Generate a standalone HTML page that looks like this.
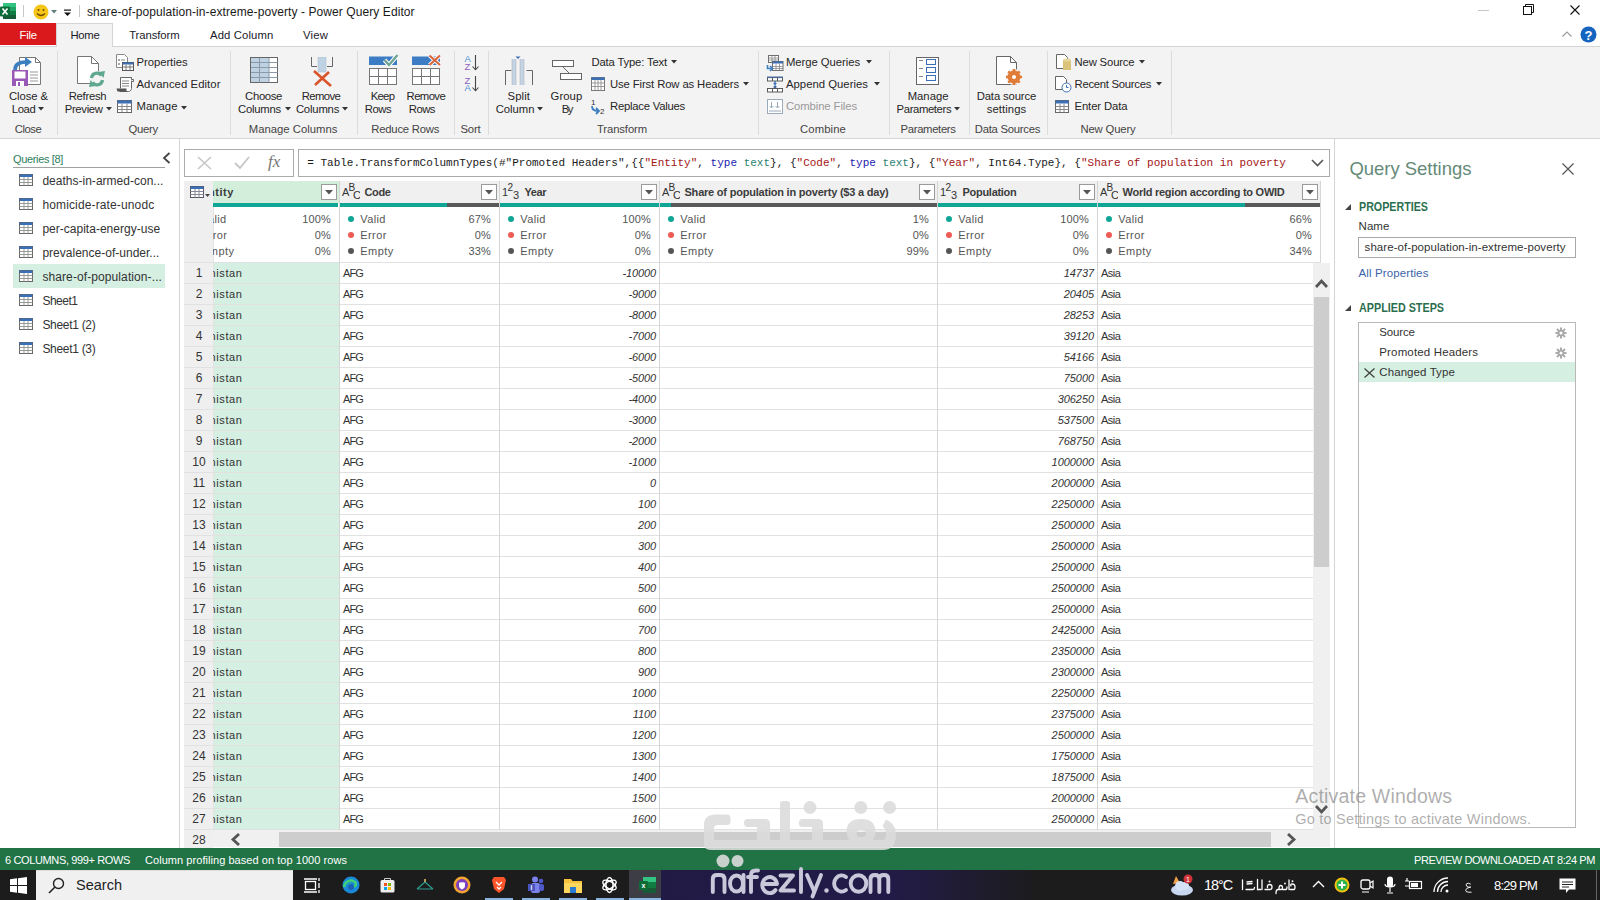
<!DOCTYPE html>
<html><head><meta charset="utf-8">
<style>
*{margin:0;padding:0;box-sizing:border-box}
html,body{width:1600px;height:900px;overflow:hidden;background:#fff;font-family:"Liberation Sans",sans-serif;color:#262626}
.a{position:absolute;white-space:nowrap}
#title{left:0;top:0;width:1600px;height:24px;background:#fff}
#tabs{left:0;top:24px;width:1600px;height:22px;background:#fff}
#ribbon{left:0;top:46px;width:1600px;height:93px;background:#f4f3f3;border-top:1px solid #d4d4d4;border-bottom:1px solid #d4d4d4}
#ribbon .a{}
.rl{font-size:11.3px;color:#262626;line-height:14px}
.gl{font-size:11.3px;color:#444;top:75px;line-height:14px}
.sep{width:1px;background:#dcdcdc;top:4px;height:84px}
#main{left:0;top:138px;width:1600px;height:710px}
#status{left:0;top:848px;width:1600px;height:22px;background:#217346;color:#fff;font-size:12px}
#task{left:0;top:870px;width:1600px;height:30px;background:#1f1f23}
</style></head><body>
<div class="a" id="title">
 <svg class="a" style="left:0;top:3px" width="17" height="17" viewBox="0 0 17 17">
  <rect x="3" y="0" width="13" height="16" fill="#107c41" rx="1"/>
  <rect x="3" y="0" width="13" height="4" fill="#33c481"/>
  <rect x="3" y="4" width="13" height="4" fill="#21a366"/>
  <rect x="3" y="12" width="13" height="4" fill="#185c37"/>
  <rect x="0" y="3.5" width="10" height="10" fill="#0e6b3a" rx="1"/>
  <path d="M2.5 5.5L7.5 11.5M7.5 5.5L2.5 11.5" stroke="#fff" stroke-width="1.6"/>
 </svg>
 <div class="a" style="left:23px;top:5px;width:1px;height:12px;background:#c8c8c8"></div>
 <svg class="a" style="left:33px;top:4px" width="16" height="16" viewBox="0 0 16 16">
  <circle cx="8" cy="8" r="7.5" fill="#f5c518"/>
  <circle cx="5.5" cy="6" r="1" fill="#6b4a00"/><circle cx="10.5" cy="6" r="1" fill="#6b4a00"/>
  <path d="M4 9.5 Q8 13.5 12 9.5" stroke="#6b4a00" stroke-width="1.2" fill="none"/>
 </svg>
 <svg class="a" style="left:51px;top:10px" width="6" height="4"><path d="M0 0H6L3 3.5Z" fill="#5f7f7f"/></svg>
 <svg class="a" style="left:64px;top:9px" width="8" height="8"><rect x="0" y="0.5" width="7" height="1.2" fill="#111"/><path d="M0 3.5H7L3.5 7Z" fill="#111"/></svg>
 <div class="a" style="left:79px;top:5px;width:1px;height:12px;background:#c8c8c8"></div>
 <div class="a" style="left:1478px;top:10px;width:11px;height:1px;background:#c8c8c8"></div>
 <svg class="a" style="left:1523px;top:4px" width="12" height="12" viewBox="0 0 12 12"><rect x="0.5" y="2.5" width="8" height="8" fill="none" stroke="#111" stroke-width="1"/><path d="M2.5 2.5V0.5H10.5V8.5H8.5" fill="none" stroke="#111" stroke-width="1"/></svg>
 <svg class="a" style="left:1570px;top:5px" width="10" height="10" viewBox="0 0 10 10"><path d="M0.5 0.5L9.5 9.5M9.5 0.5L0.5 9.5" stroke="#111" stroke-width="1.1"/></svg>
<div class="a" style="left:87.00px;top:5.59px;font-size:12.00px;line-height:12.00px;color:#1a1a1a;letter-spacing:0.083px">share-of-population-in-extreme-poverty - Power Query Editor</div>
</div>
<div class="a" id="tabs">
 <div class="a" style="left:0;top:-1px;width:56px;height:22px;background:#d9191c"></div>
 <div class="a" style="left:56px;top:-1px;width:57px;height:23px;background:#f4f3f3;border:1px solid #d4d4d4;border-bottom:none"></div>
 <svg class="a" style="left:1562px;top:7px" width="10" height="6"><path d="M0.5 5.5L5 1L9.5 5.5" stroke="#999" stroke-width="1.1" fill="none"/></svg>
 <svg class="a" style="left:1580px;top:2px" width="17" height="17" viewBox="0 0 17 17"><circle cx="8.5" cy="8.5" r="8" fill="#1565c0"/><text x="8.5" y="13.5" font-size="13" font-weight="bold" fill="#fff" text-anchor="middle" font-family="Liberation Sans">?</text></svg>
<div class="a" style="left:19.50px;top:6.03px;font-size:11.30px;line-height:11.30px;color:#fff;letter-spacing:-0.227px">File</div>
<div class="a" style="left:70.50px;top:6.03px;font-size:11.30px;line-height:11.30px;color:#1a1a2a;letter-spacing:-0.286px">Home</div>
<div class="a" style="left:129.20px;top:6.03px;font-size:11.30px;line-height:11.30px;color:#1a1a2a;letter-spacing:-0.085px">Transform</div>
<div class="a" style="left:210.00px;top:6.03px;font-size:11.30px;line-height:11.30px;color:#1a1a2a;letter-spacing:0.131px">Add Column</div>
<div class="a" style="left:303.00px;top:6.03px;font-size:11.30px;line-height:11.30px;color:#1a1a2a;letter-spacing:0.178px">View</div>
</div>
<div class="a" id="ribbon">
 <!-- separators -->
 <div class="a sep" style="left:57px"></div>
 <div class="a sep" style="left:230px"></div>
 <div class="a sep" style="left:357px"></div>
 <div class="a sep" style="left:454px"></div>
 <div class="a sep" style="left:488px"></div>
 <div class="a sep" style="left:758px"></div>
 <div class="a sep" style="left:889px"></div>
 <div class="a sep" style="left:969px"></div>
 <div class="a sep" style="left:1047px"></div>
 <div class="a sep" style="left:1171px"></div>
 <!-- group labels -->

 <!-- Close & Load -->
 <svg class="a" style="left:11px;top:9px" width="31" height="32" viewBox="0 0 31 32">
  <path d="M8.5 1.5H24.5L29.5 6.5V28.5H8.5Z" fill="#fff" stroke="#777" stroke-width="1"/>
  <path d="M24.5 1.5V6.5H29.5" fill="none" stroke="#777"/>
  <path d="M19 16H27M19 19H27M19 22H27M19 25H27" stroke="#999" stroke-width="1"/>
  <path d="M4 14 C4 8 9 6 15 6" stroke="#3b7fc1" stroke-width="3.6" fill="none"/>
  <path d="M14 1 L21 6 L14 11Z" fill="#3b7fc1"/>
  <rect x="1" y="14" width="16" height="16" fill="#9b59b6"/>
  <rect x="3.5" y="15.5" width="11" height="7" fill="#fff"/>
  <rect x="5" y="25" width="8" height="5" fill="#fff"/>
  <rect x="7" y="26" width="2" height="4" fill="#9b59b6"/>
 </svg>
 <svg class="a tri" style="left:38px;top:60px" width="6" height="4"><path d="M0 0H6L3 3.5Z" fill="#333"/></svg>

 <!-- Refresh Preview -->
 <svg class="a" style="left:76px;top:8px" width="30" height="33" viewBox="0 0 30 33">
  <path d="M1.5 1.5H15.5L22.5 8.5V28.5H1.5Z" fill="#fff" stroke="#777"/>
  <path d="M15.5 1.5V8.5H22.5" fill="none" stroke="#777"/>
  <circle cx="21" cy="24" r="8" fill="#f4f3f3"/>
  <path d="M15.5 23 A5.5 5.5 0 0 1 25.5 20.5" stroke="#5ea88f" stroke-width="3.2" fill="none"/>
  <path d="M26.5 25 A5.5 5.5 0 0 1 16.5 27.5" stroke="#5ea88f" stroke-width="3.2" fill="none"/>
  <path d="M22.5 17L29 16L27.5 23Z" fill="#5ea88f"/>
  <path d="M19.5 31L13 32L14.5 25Z" fill="#5ea88f"/>
 </svg>
 <svg class="a tri" style="left:106px;top:60px" width="6" height="4"><path d="M0 0H6L3 3.5Z" fill="#333"/></svg>

 <!-- Properties / Advanced Editor / Manage -->
 <svg class="a" style="left:116px;top:7px" width="18" height="17" viewBox="0 0 18 17">
  <path d="M0.5 0.5H8.5L11.5 3.5V13.5H0.5Z" fill="#fff" stroke="#888"/>
  <circle cx="3" cy="6" r="1" fill="#888"/><circle cx="3" cy="10" r="1" fill="#888"/>
  <path d="M5 6H9" stroke="#888"/>
  <rect x="6.5" y="8.5" width="11" height="8" fill="#fff" stroke="#555"/>
  <rect x="6.5" y="8.5" width="11" height="2" fill="#3b6fb6"/>
  <path d="M6.5 13H17.5M10 10.5V16.5M14 10.5V16.5" stroke="#777"/>
 </svg>
 <svg class="a" style="left:116px;top:30px" width="18" height="16" viewBox="0 0 18 16">
  <path d="M4.5 0.5H15.5V11.5C15.5 13 14 14.5 12.5 14.5H3.5" fill="#fff" stroke="#666"/>
  <path d="M15.5 2.5H17.5V4.5H15.5" fill="#fff" stroke="#666"/>
  <path d="M6 4H13M6 6.5H13M6 9H13" stroke="#888"/>
  <path d="M0.5 11.5H10.5V14.5H1.5Z" fill="#555"/>
  <path d="M4.5 0.5V11.5" stroke="#666"/>
 </svg>
 <svg class="a" style="left:117px;top:53px" width="15" height="13" viewBox="0 0 15 13">
  <rect x="0.5" y="0.5" width="14" height="12" fill="#fff" stroke="#666"/>
  <rect x="0.5" y="0.5" width="14" height="3" fill="#3b6fb6"/>
  <path d="M0.5 6.5H14.5M0.5 9.5H14.5M5 3.5V12.5M10 3.5V12.5" stroke="#888"/>
 </svg>
 <svg class="a tri" style="left:181px;top:59px" width="6" height="4"><path d="M0 0H6L3 3.5Z" fill="#333"/></svg>

 <!-- Choose Columns -->
 <svg class="a" style="left:250px;top:10px" width="29" height="27" viewBox="0 0 29 27">
  <rect x="0.5" y="0.5" width="27" height="25" fill="#fff" stroke="#666"/>
  <rect x="1" y="1" width="18" height="24" fill="#bfd2e3"/>
  <path d="M9.5 1V25.5M19 1V25.5M1 5.5H27.5M1 10.5H27.5M1 15.5H27.5M1 20.5H27.5" stroke="#8a9aa8"/>
 </svg>
 <svg class="a tri" style="left:285px;top:60px" width="6" height="4"><path d="M0 0H6L3 3.5Z" fill="#333"/></svg>

 <!-- Remove Columns -->
 <svg class="a" style="left:310px;top:10px" width="24" height="30" viewBox="0 0 24 30">
  <path d="M1.5 0V9.5H7M22.5 0V9.5H17" stroke="#666" fill="none"/>
  <rect x="8" y="0" width="8" height="15" fill="#bfd2e3" stroke="#a8bccc" stroke-width="0.5"/>
  <path d="M4 14L21 29M19 15L5 28" stroke="#d9532b" stroke-width="2.6"/>
 </svg>
 <svg class="a tri" style="left:342px;top:60px" width="6" height="4"><path d="M0 0H6L3 3.5Z" fill="#333"/></svg>

 <!-- Keep Rows -->
 <svg class="a" style="left:368px;top:7px" width="32" height="32" viewBox="0 0 32 32">
  <rect x="1" y="2.5" width="28" height="8.5" fill="#3b7cc4"/>
  <rect x="1.5" y="14.5" width="27" height="16" fill="#fff" stroke="#777"/>
  <path d="M1.5 22.5H28.5M10.5 14.5V30.5M19.5 14.5V30.5" stroke="#777" stroke-width="1"/>
  <path d="M16.5 6L21 11L29.5 1" stroke="#fff" stroke-width="4.4" fill="none"/>
  <path d="M16.5 6L21 11L29.5 1" stroke="#6fa393" stroke-width="2.4" fill="none"/>
 </svg>
 <!-- Remove Rows -->
 <svg class="a" style="left:411px;top:7px" width="32" height="32" viewBox="0 0 32 32">
  <rect x="1" y="2.5" width="28" height="8.5" fill="#3b7cc4"/>
  <rect x="1.5" y="14.5" width="27" height="16" fill="#fff" stroke="#777"/>
  <path d="M1.5 22.5H28.5M10.5 14.5V30.5M19.5 14.5V30.5" stroke="#777" stroke-width="1"/>
  <path d="M18.5 1.5L29 11M29 1.5L18.5 11" stroke="#fff" stroke-width="4" />
  <path d="M18.5 1.5L29 11M29 1.5L18.5 11" stroke="#d9653b" stroke-width="2.2"/>
 </svg>
 <!-- Sort -->
 <svg class="a" style="left:464px;top:7px" width="16" height="38" viewBox="0 0 16 38">
  <text x="0.5" y="7.5" font-size="9.5" fill="#4a8fd0" font-family="Liberation Sans">A</text>
  <text x="0.5" y="15.5" font-size="9.5" fill="#8a5fc0" font-family="Liberation Sans">Z</text>
  <path d="M11.5 1V15.5M8.5 12.5L11.5 15.8L14.5 12.5" stroke="#444" stroke-width="1.1" fill="none"/>
  <text x="0.5" y="29.5" font-size="9.5" fill="#8a5fc0" font-family="Liberation Sans">Z</text>
  <text x="0.5" y="37" font-size="9.5" fill="#4a8fd0" font-family="Liberation Sans">A</text>
  <path d="M11.5 22V36.5M8.5 33.5L11.5 36.8L14.5 33.5" stroke="#444" stroke-width="1.1" fill="none"/>
 </svg>

 <!-- Split Column -->
 <svg class="a" style="left:504px;top:9px" width="30" height="30" viewBox="0 0 30 30">
  <path d="M1.5 29V14.5H7.5M28.5 29V14.5H22.5" stroke="#666" fill="none"/>
  <rect x="8" y="3" width="4" height="26" fill="#c4d4e2"/>
  <rect x="16" y="3" width="4" height="26" fill="#c4d4e2"/>
  <path d="M8 3V29M12 3V29M16 3V29M20 3V29" stroke="#aab" stroke-width="0.5"/>
  <path d="M11.5 0.5H16.5L14 3Z" fill="#3b6fb6"/>
 </svg>
 <svg class="a tri" style="left:537px;top:60px" width="6" height="4"><path d="M0 0H6L3 3.5Z" fill="#333"/></svg>

 <!-- Group By -->
 <svg class="a" style="left:552px;top:13px" width="31" height="21" viewBox="0 0 31 21">
  <rect x="0.5" y="0.5" width="21" height="6" fill="#fff" stroke="#666"/>
  <rect x="8.5" y="13.5" width="21" height="6" fill="#fff" stroke="#666"/>
  <path d="M11 7L17 13" stroke="#666"/>
 </svg>

 <!-- Data Type etc -->
 <svg class="a tri" style="left:671px;top:13px" width="6" height="4"><path d="M0 0H6L3 3.5Z" fill="#333"/></svg>
 <svg class="a" style="left:591px;top:30px" width="15" height="14" viewBox="0 0 15 14">
  <rect x="0.5" y="0.5" width="13" height="13" fill="#fff" stroke="#777"/>
  <rect x="0.5" y="0.5" width="13" height="2.5" fill="#3b6fb6"/>
  <path d="M0.5 6H13.5M0.5 9.5H13.5M4 3V13.5M7 3V13.5M10 3V13.5" stroke="#999"/>
 </svg>
 <svg class="a tri" style="left:743px;top:35px" width="6" height="4"><path d="M0 0H6L3 3.5Z" fill="#333"/></svg>
 <svg class="a" style="left:590px;top:51px" width="17" height="17" viewBox="0 0 17 17">
  <text x="1" y="7" font-size="8" fill="#333" font-family="Liberation Sans">1</text>
  <text x="10" y="16" font-size="8" fill="#333" font-family="Liberation Sans">2</text>
  <path d="M2 8C2 12 4 13 8 13" stroke="#3b7fc1" stroke-width="1.8" fill="none"/>
  <path d="M6 10L9 13L6 16" stroke="#3b7fc1" stroke-width="1.8" fill="none"/>
 </svg>

 <!-- Combine -->
 <svg class="a" style="left:766px;top:8px" width="18" height="17" viewBox="0 0 18 17">
  <rect x="2.5" y="0.5" width="10" height="7" fill="#fff" stroke="#6d6d6d"/>
  <path d="M2.5 3H12.5M2.5 5H12.5M6 0.5V7.5M9 0.5V7.5" stroke="#888" stroke-width="0.8"/>
  <rect x="6.5" y="6.5" width="10.5" height="9" fill="#fff" stroke="#6d6d6d"/>
  <rect x="6.5" y="6.5" width="10.5" height="2" fill="#3b6fb6"/>
  <path d="M6.5 11.5H17M6.5 13.5H17M10 8.5V15.5M13.5 8.5V15.5" stroke="#888" stroke-width="0.8"/>
  <path d="M1.5 10V13.5H5.5" stroke="#3b7fc1" stroke-width="1.6" fill="none"/>
  <path d="M4 11L6.5 13.5L4 16" stroke="#3b7fc1" stroke-width="1.6" fill="none"/>
 </svg>
 <svg class="a" style="left:766px;top:29px" width="18" height="17" viewBox="0 0 18 17">
  <rect x="1.5" y="1.5" width="15" height="3.5" fill="#fff" stroke="#5a5a5a"/>
  <rect x="1" y="0.5" width="16" height="1.6" fill="#4a6a9a"/>
  <path d="M6.5 1.5V5M11.5 1.5V5" stroke="#5a5a5a"/>
  <path d="M9 5V8.5" stroke="#3b6fb6" stroke-width="1.4"/>
  <path d="M7 7L9 9.2L11 7Z" fill="#3b6fb6"/>
  <circle cx="9" cy="10.8" r="1.5" fill="#3b6fb6"/>
  <path d="M9 11V12.5" stroke="#5a5a5a"/>
  <rect x="1.5" y="12.5" width="15" height="3.5" fill="#fff" stroke="#5a5a5a"/>
  <path d="M6.5 12.5V16M11.5 12.5V16" stroke="#5a5a5a"/>
 </svg>
 <svg class="a tri" style="left:866px;top:13px" width="6" height="4"><path d="M0 0H6L3 3.5Z" fill="#333"/></svg>
 <svg class="a tri" style="left:874px;top:35px" width="6" height="4"><path d="M0 0H6L3 3.5Z" fill="#333"/></svg>
 <svg class="a" style="left:766px;top:51px" width="18" height="17" viewBox="0 0 18 17">
  <rect x="1.5" y="1.5" width="15" height="14" fill="#fff" stroke="#9ab"/>
  <path d="M5.5 4V10M3.5 8L5.5 10L7.5 8M11.5 4V10M9.5 8L11.5 10L13.5 8M3 13H15" stroke="#9ab" fill="none"/>
 </svg>

 <!-- Manage Parameters -->
 <svg class="a" style="left:915px;top:9px" width="25" height="30" viewBox="0 0 25 30">
  <rect x="1.5" y="1.5" width="22" height="27" fill="#fff" stroke="#666"/>
  <path d="M4 4.5H8M4 12.5H8M4 20.5H8" stroke="#888"/>
  <rect x="11.5" y="3.5" width="9" height="5" fill="#fff" stroke="#3b6fb6"/>
  <rect x="11.5" y="11.5" width="9" height="5" fill="#fff" stroke="#3b6fb6"/>
  <rect x="11.5" y="19.5" width="9" height="5" fill="#fff" stroke="#3b6fb6"/>
 </svg>
 <svg class="a tri" style="left:954px;top:60px" width="6" height="4"><path d="M0 0H6L3 3.5Z" fill="#333"/></svg>

 <!-- Data source settings -->
 <svg class="a" style="left:995px;top:9px" width="29" height="30" viewBox="0 0 29 30">
  <path d="M1.5 0.5H15.5L21.5 6.5V28.5H1.5Z" fill="#fff" stroke="#666"/>
  <path d="M15.5 0.5V6.5H21.5" fill="none" stroke="#666"/>
  <circle cx="19" cy="21" r="8" fill="#f4f3f3"/>
  <circle cx="19" cy="21" r="5" fill="none" stroke="#e07b35" stroke-width="3"/>
  <path d="M19 13V29M11 21H27M13.3 15.3L24.7 26.7M24.7 15.3L13.3 26.7" stroke="#e07b35" stroke-width="2.6"/>
  <circle cx="19" cy="21" r="2" fill="#fff"/>
 </svg>

 <!-- New Query -->
 <svg class="a" style="left:1056px;top:7px" width="17" height="17" viewBox="0 0 17 17">
  <path d="M0.5 0.5H8.5L11.5 3.5V14.5H0.5Z" fill="#fff" stroke="#666"/>
  <rect x="7" y="6" width="8" height="10" fill="#d9c27a"/>
  <ellipse cx="11" cy="6" rx="4" ry="1.5" fill="#e8d598"/>
 </svg>
 <svg class="a tri" style="left:1139px;top:13px" width="6" height="4"><path d="M0 0H6L3 3.5Z" fill="#333"/></svg>
 <svg class="a" style="left:1054px;top:29px" width="18" height="17" viewBox="0 0 18 17">
  <path d="M1.5 0.5H9.5L12.5 3.5V13.5H1.5Z" fill="#fff" stroke="#666"/>
  <circle cx="12.5" cy="11.5" r="4.5" fill="#fff" stroke="#3b6fb6"/>
  <path d="M12.5 9V11.5H14.5" stroke="#3b6fb6" fill="none"/>
 </svg>
 <svg class="a tri" style="left:1156px;top:35px" width="6" height="4"><path d="M0 0H6L3 3.5Z" fill="#333"/></svg>
 <svg class="a" style="left:1055px;top:53px" width="15" height="13" viewBox="0 0 15 13">
  <rect x="0.5" y="0.5" width="13" height="12" fill="#fff" stroke="#666"/>
  <rect x="0.5" y="0.5" width="13" height="3" fill="#3b6fb6"/>
  <path d="M0.5 6.5H13.5M0.5 9.5H13.5M5 3.5V12.5M9 3.5V12.5" stroke="#888"/>
 </svg>
<div class="a" style="left:9.00px;top:43.93px;font-size:11.30px;line-height:11.30px;color:#262626;letter-spacing:-0.081px">Close &amp;</div>
<div class="a" style="left:11.80px;top:56.73px;font-size:11.30px;line-height:11.30px;color:#262626;letter-spacing:-0.385px">Load</div>
<div class="a" style="left:68.70px;top:43.93px;font-size:11.30px;line-height:11.30px;color:#262626;letter-spacing:-0.281px">Refresh</div>
<div class="a" style="left:64.70px;top:56.73px;font-size:11.30px;line-height:11.30px;color:#262626;letter-spacing:-0.313px">Preview</div>
<div class="a" style="left:245.10px;top:43.93px;font-size:11.30px;line-height:11.30px;color:#262626;letter-spacing:-0.325px">Choose</div>
<div class="a" style="left:238.00px;top:56.73px;font-size:11.30px;line-height:11.30px;color:#262626;letter-spacing:-0.227px">Columns</div>
<div class="a" style="left:301.80px;top:43.93px;font-size:11.30px;line-height:11.30px;color:#262626;letter-spacing:-0.596px">Remove</div>
<div class="a" style="left:295.90px;top:56.73px;font-size:11.30px;line-height:11.30px;color:#262626;letter-spacing:-0.184px">Columns</div>
<div class="a" style="left:370.70px;top:43.93px;font-size:11.30px;line-height:11.30px;color:#262626;letter-spacing:-0.698px">Keep</div>
<div class="a" style="left:364.80px;top:56.73px;font-size:11.30px;line-height:11.30px;color:#262626;letter-spacing:-0.439px">Rows</div>
<div class="a" style="left:406.60px;top:43.93px;font-size:11.30px;line-height:11.30px;color:#262626;letter-spacing:-0.596px">Remove</div>
<div class="a" style="left:408.80px;top:56.73px;font-size:11.30px;line-height:11.30px;color:#262626;letter-spacing:-0.514px">Rows</div>
<div class="a" style="left:507.60px;top:43.93px;font-size:11.30px;line-height:11.30px;color:#262626;letter-spacing:0.103px">Split</div>
<div class="a" style="left:495.70px;top:56.73px;font-size:11.30px;line-height:11.30px;color:#262626;letter-spacing:-0.040px">Column</div>
<div class="a" style="left:550.60px;top:43.93px;font-size:11.30px;line-height:11.30px;color:#262626;letter-spacing:0.059px">Group</div>
<div class="a" style="left:561.80px;top:56.73px;font-size:11.30px;line-height:11.30px;color:#262626;letter-spacing:-1.494px">By</div>
<div class="a" style="left:907.70px;top:43.93px;font-size:11.30px;line-height:11.30px;color:#262626;letter-spacing:-0.006px">Manage</div>
<div class="a" style="left:896.60px;top:56.73px;font-size:11.30px;line-height:11.30px;color:#262626;letter-spacing:-0.381px">Parameters</div>
<div class="a" style="left:976.70px;top:43.93px;font-size:11.30px;line-height:11.30px;color:#262626;letter-spacing:-0.130px">Data source</div>
<div class="a" style="left:986.80px;top:56.73px;font-size:11.30px;line-height:11.30px;color:#262626;letter-spacing:0.057px">settings</div>
<div class="a" style="left:136.50px;top:10.43px;font-size:11.30px;line-height:11.30px;color:#262626;letter-spacing:-0.050px">Properties</div>
<div class="a" style="left:136.50px;top:31.93px;font-size:11.30px;line-height:11.30px;color:#262626;letter-spacing:0.072px">Advanced Editor</div>
<div class="a" style="left:136.50px;top:54.18px;font-size:11.30px;line-height:11.30px;color:#262626;letter-spacing:0.027px">Manage</div>
<div class="a" style="left:591.50px;top:10.43px;font-size:11.30px;line-height:11.30px;color:#262626;letter-spacing:-0.173px">Data Type: Text</div>
<div class="a" style="left:610.00px;top:31.93px;font-size:11.30px;line-height:11.30px;color:#262626;letter-spacing:-0.120px">Use First Row as Headers</div>
<div class="a" style="left:610.00px;top:54.18px;font-size:11.30px;line-height:11.30px;color:#262626;letter-spacing:-0.237px">Replace Values</div>
<div class="a" style="left:786.00px;top:10.43px;font-size:11.30px;line-height:11.30px;color:#262626;letter-spacing:-0.057px">Merge Queries</div>
<div class="a" style="left:786.00px;top:31.93px;font-size:11.30px;line-height:11.30px;color:#262626;letter-spacing:0.024px">Append Queries</div>
<div class="a" style="left:786.00px;top:54.18px;font-size:11.30px;line-height:11.30px;color:#9a9a9a;letter-spacing:-0.094px">Combine Files</div>
<div class="a" style="left:1074.50px;top:10.43px;font-size:11.30px;line-height:11.30px;color:#262626;letter-spacing:-0.155px">New Source</div>
<div class="a" style="left:1074.50px;top:31.93px;font-size:11.30px;line-height:11.30px;color:#262626;letter-spacing:-0.271px">Recent Sources</div>
<div class="a" style="left:1074.50px;top:54.18px;font-size:11.30px;line-height:11.30px;color:#262626;letter-spacing:-0.102px">Enter Data</div>
<div class="a" style="left:14.75px;top:77.13px;font-size:11.30px;line-height:11.30px;color:#444;letter-spacing:-0.478px">Close</div>
<div class="a" style="left:128.50px;top:77.13px;font-size:11.30px;line-height:11.30px;color:#444;letter-spacing:-0.254px">Query</div>
<div class="a" style="left:248.75px;top:77.13px;font-size:11.30px;line-height:11.30px;color:#444;letter-spacing:0.013px">Manage Columns</div>
<div class="a" style="left:371.25px;top:77.13px;font-size:11.30px;line-height:11.30px;color:#444;letter-spacing:-0.213px">Reduce Rows</div>
<div class="a" style="left:460.50px;top:77.13px;font-size:11.30px;line-height:11.30px;color:#444;letter-spacing:-0.181px">Sort</div>
<div class="a" style="left:597.00px;top:77.13px;font-size:11.30px;line-height:11.30px;color:#444;letter-spacing:-0.119px">Transform</div>
<div class="a" style="left:800.00px;top:77.13px;font-size:11.30px;line-height:11.30px;color:#444;letter-spacing:0.111px">Combine</div>
<div class="a" style="left:900.60px;top:77.13px;font-size:11.30px;line-height:11.30px;color:#444;letter-spacing:-0.341px">Parameters</div>
<div class="a" style="left:974.80px;top:77.13px;font-size:11.30px;line-height:11.30px;color:#444;letter-spacing:-0.264px">Data Sources</div>
<div class="a" style="left:1080.50px;top:77.13px;font-size:11.30px;line-height:11.30px;color:#444;letter-spacing:-0.169px">New Query</div>
</div>
<div class="a" id="main">
<div class="a" style="left:179px;top:0;width:1px;height:710px;background:#d4d4d4"></div>
<div class="a" style="left:13.00px;top:16.19px;font-size:11.00px;line-height:11.00px;color:#2e7d5b;letter-spacing:-0.346px">Queries [8]</div>
<div class="a" style="left:13px;top:29px;width:152px;height:1px;background:#a0a0a0"></div>
<svg class="a" style="left:162px;top:14px" width="9" height="12"><path d="M7.5 1L2 6L7.5 11" stroke="#444" stroke-width="1.8" fill="none"/></svg>
<svg class="a" style="left:19px;top:36px" width="14" height="12" viewBox="0 0 14 12"><rect x="0.5" y="0.5" width="13" height="11" fill="#fff" stroke="#666"/><rect x="0.5" y="0.5" width="13" height="2.5" fill="#3b6fb6"/><path d="M0.5 5.5H13.5M0.5 8.5H13.5M5 3V11.5M9 3V11.5" stroke="#999"/></svg>
<div class="a" style="left:42.40px;top:36.84px;font-size:12.00px;line-height:12.00px;color:#333;letter-spacing:0.013px">deaths-in-armed-con...</div>
<svg class="a" style="left:19px;top:60px" width="14" height="12" viewBox="0 0 14 12"><rect x="0.5" y="0.5" width="13" height="11" fill="#fff" stroke="#666"/><rect x="0.5" y="0.5" width="13" height="2.5" fill="#3b6fb6"/><path d="M0.5 5.5H13.5M0.5 8.5H13.5M5 3V11.5M9 3V11.5" stroke="#999"/></svg>
<div class="a" style="left:42.40px;top:60.84px;font-size:12.00px;line-height:12.00px;color:#333;letter-spacing:0.137px">homicide-rate-unodc</div>
<svg class="a" style="left:19px;top:84px" width="14" height="12" viewBox="0 0 14 12"><rect x="0.5" y="0.5" width="13" height="11" fill="#fff" stroke="#666"/><rect x="0.5" y="0.5" width="13" height="2.5" fill="#3b6fb6"/><path d="M0.5 5.5H13.5M0.5 8.5H13.5M5 3V11.5M9 3V11.5" stroke="#999"/></svg>
<div class="a" style="left:42.40px;top:84.84px;font-size:12.00px;line-height:12.00px;color:#333;letter-spacing:0.014px">per-capita-energy-use</div>
<svg class="a" style="left:19px;top:108px" width="14" height="12" viewBox="0 0 14 12"><rect x="0.5" y="0.5" width="13" height="11" fill="#fff" stroke="#666"/><rect x="0.5" y="0.5" width="13" height="2.5" fill="#3b6fb6"/><path d="M0.5 5.5H13.5M0.5 8.5H13.5M5 3V11.5M9 3V11.5" stroke="#999"/></svg>
<div class="a" style="left:42.40px;top:108.84px;font-size:12.00px;line-height:12.00px;color:#333;letter-spacing:0.012px">prevalence-of-under...</div>
<div class="a" style="left:13px;top:126px;width:152px;height:24px;background:#d5efe2"></div>
<svg class="a" style="left:19px;top:132px" width="14" height="12" viewBox="0 0 14 12"><rect x="0.5" y="0.5" width="13" height="11" fill="#fff" stroke="#666"/><rect x="0.5" y="0.5" width="13" height="2.5" fill="#3b6fb6"/><path d="M0.5 5.5H13.5M0.5 8.5H13.5M5 3V11.5M9 3V11.5" stroke="#999"/></svg>
<div class="a" style="left:42.40px;top:132.84px;font-size:12.00px;line-height:12.00px;color:#333;letter-spacing:0.096px">share-of-population-...</div>
<svg class="a" style="left:19px;top:156px" width="14" height="12" viewBox="0 0 14 12"><rect x="0.5" y="0.5" width="13" height="11" fill="#fff" stroke="#666"/><rect x="0.5" y="0.5" width="13" height="2.5" fill="#3b6fb6"/><path d="M0.5 5.5H13.5M0.5 8.5H13.5M5 3V11.5M9 3V11.5" stroke="#999"/></svg>
<div class="a" style="left:42.40px;top:156.84px;font-size:12.00px;line-height:12.00px;color:#333;letter-spacing:-0.506px">Sheet1</div>
<svg class="a" style="left:19px;top:180px" width="14" height="12" viewBox="0 0 14 12"><rect x="0.5" y="0.5" width="13" height="11" fill="#fff" stroke="#666"/><rect x="0.5" y="0.5" width="13" height="2.5" fill="#3b6fb6"/><path d="M0.5 5.5H13.5M0.5 8.5H13.5M5 3V11.5M9 3V11.5" stroke="#999"/></svg>
<div class="a" style="left:42.40px;top:180.84px;font-size:12.00px;line-height:12.00px;color:#333;letter-spacing:-0.304px">Sheet1 (2)</div>
<svg class="a" style="left:19px;top:204px" width="14" height="12" viewBox="0 0 14 12"><rect x="0.5" y="0.5" width="13" height="11" fill="#fff" stroke="#666"/><rect x="0.5" y="0.5" width="13" height="2.5" fill="#3b6fb6"/><path d="M0.5 5.5H13.5M0.5 8.5H13.5M5 3V11.5M9 3V11.5" stroke="#999"/></svg>
<div class="a" style="left:42.40px;top:204.84px;font-size:12.00px;line-height:12.00px;color:#333;letter-spacing:-0.304px">Sheet1 (3)</div>
<div class="a" style="left:184px;top:11px;width:110px;height:28px;border:1px solid #ababab;background:#fff"></div>
<svg class="a" style="left:197px;top:18px" width="15" height="14"><path d="M1 1L14 13M14 1L1 13" stroke="#c6c6c6" stroke-width="1.6"/></svg>
<svg class="a" style="left:234px;top:18px" width="16" height="13"><path d="M1 7L6 12L15 1" stroke="#c6c6c6" stroke-width="1.8" fill="none"/></svg>
<div class="a" style="left:268px;top:15px;font-family:'Liberation Serif',serif;font-style:italic;font-size:17px;color:#777;line-height:18px">fx</div>
<div class="a" style="left:298px;top:11px;width:1032px;height:28px;border:1px solid #ababab;background:#fff"></div>
<div class="a" style="left:307.2px;top:19.74px;font-family:'Liberation Mono',monospace;font-size:11.0px;color:#1a1a1a;line-height:11.0px;letter-spacing:0.011px">= Table.TransformColumnTypes(#"Promoted Headers",{{<span style="color:#a31515">"Entity"</span>, <span style="color:#1a1ab0">type</span> <span style="color:#2a7f70">text</span>}, {<span style="color:#a31515">"Code"</span>, <span style="color:#1a1ab0">type</span> <span style="color:#2a7f70">text</span>}, {<span style="color:#a31515">"Year"</span>, Int64.Type}, {<span style="color:#a31515">"Share of population in poverty</span></div>
<svg class="a" style="left:1311px;top:21px" width="13" height="8"><path d="M1 1L6.5 6.5L12 1" stroke="#555" stroke-width="1.6" fill="none"/></svg>
<div class="a" style="left:184px;top:43px;width:1136px;height:22px;background:#f0f0f0"></div>
<div class="a" style="left:184px;top:43px;width:29px;height:667px;background:#efefef"></div>
<div class="a" style="left:213px;top:43px;width:126px;height:22px;background:#d3eedb"></div>
<svg class="a" style="left:190px;top:48px" width="20" height="13" viewBox="0 0 20 13"><rect x="0.5" y="0.5" width="13" height="11" fill="#fff" stroke="#556"/><rect x="0.5" y="0.5" width="13" height="2.5" fill="#3b6fb6"/><path d="M0.5 5.5H13.5M0.5 8.5H13.5M5 3V11.5M9 3V11.5" stroke="#889"/><path d="M15 8H20L17.5 11Z" fill="#444"/></svg>
<div class="a" style="left:213px;top:69px;width:1107px;height:55px;background:#fff"></div>
<div class="a" style="left:213px;top:124px;width:126px;height:569px;background:#d5efe2"></div>
<div class="a" style="left:184px;top:124px;width:1129px;height:1px;background:#e1e1e1"></div>
<div class="a" style="left:184px;top:145px;width:1129px;height:1px;background:#e1e1e1"></div>
<div class="a" style="left:184px;top:166px;width:1129px;height:1px;background:#e1e1e1"></div>
<div class="a" style="left:184px;top:187px;width:1129px;height:1px;background:#e1e1e1"></div>
<div class="a" style="left:184px;top:208px;width:1129px;height:1px;background:#e1e1e1"></div>
<div class="a" style="left:184px;top:229px;width:1129px;height:1px;background:#e1e1e1"></div>
<div class="a" style="left:184px;top:250px;width:1129px;height:1px;background:#e1e1e1"></div>
<div class="a" style="left:184px;top:271px;width:1129px;height:1px;background:#e1e1e1"></div>
<div class="a" style="left:184px;top:292px;width:1129px;height:1px;background:#e1e1e1"></div>
<div class="a" style="left:184px;top:313px;width:1129px;height:1px;background:#e1e1e1"></div>
<div class="a" style="left:184px;top:334px;width:1129px;height:1px;background:#e1e1e1"></div>
<div class="a" style="left:184px;top:355px;width:1129px;height:1px;background:#e1e1e1"></div>
<div class="a" style="left:184px;top:376px;width:1129px;height:1px;background:#e1e1e1"></div>
<div class="a" style="left:184px;top:397px;width:1129px;height:1px;background:#e1e1e1"></div>
<div class="a" style="left:184px;top:418px;width:1129px;height:1px;background:#e1e1e1"></div>
<div class="a" style="left:184px;top:439px;width:1129px;height:1px;background:#e1e1e1"></div>
<div class="a" style="left:184px;top:460px;width:1129px;height:1px;background:#e1e1e1"></div>
<div class="a" style="left:184px;top:481px;width:1129px;height:1px;background:#e1e1e1"></div>
<div class="a" style="left:184px;top:502px;width:1129px;height:1px;background:#e1e1e1"></div>
<div class="a" style="left:184px;top:523px;width:1129px;height:1px;background:#e1e1e1"></div>
<div class="a" style="left:184px;top:544px;width:1129px;height:1px;background:#e1e1e1"></div>
<div class="a" style="left:184px;top:565px;width:1129px;height:1px;background:#e1e1e1"></div>
<div class="a" style="left:184px;top:586px;width:1129px;height:1px;background:#e1e1e1"></div>
<div class="a" style="left:184px;top:607px;width:1129px;height:1px;background:#e1e1e1"></div>
<div class="a" style="left:184px;top:628px;width:1129px;height:1px;background:#e1e1e1"></div>
<div class="a" style="left:184px;top:649px;width:1129px;height:1px;background:#e1e1e1"></div>
<div class="a" style="left:184px;top:670px;width:1129px;height:1px;background:#e1e1e1"></div>
<div class="a" style="left:184px;top:691px;width:1129px;height:1px;background:#e1e1e1"></div>
<div class="a" style="left:339px;top:43px;width:1px;height:650px;background:#d6d6d6"></div>
<div class="a" style="left:499px;top:43px;width:1px;height:650px;background:#d6d6d6"></div>
<div class="a" style="left:659px;top:43px;width:1px;height:650px;background:#d6d6d6"></div>
<div class="a" style="left:937px;top:43px;width:1px;height:650px;background:#d6d6d6"></div>
<div class="a" style="left:1097px;top:43px;width:1px;height:650px;background:#d6d6d6"></div>
<div class="a" style="left:213px;top:69px;width:1px;height:624px;background:#e4e4e4"></div>
<div class="a" style="left:213px;top:65px;width:125px;height:4px;background:#595959"></div>
<div class="a" style="left:213px;top:65px;width:125px;height:4px;background:#0fa696"></div>
<div class="a" style="left:321px;top:46px;width:16px;height:16px;border:1px solid #9a9a9a;background:#fff"><svg style="position:absolute;left:3px;top:5px" width="8" height="5"><path d="M0 0H8L4 4.5Z" fill="#555"/></svg></div>
<div class="a" style="left:213px;top:43px;width:100px;height:22px;overflow:hidden">
<div class="a" style="left:-13.00px;top:5.69px;font-size:11.00px;line-height:11.00px;color:#3c3c3c;letter-spacing:0.574px;font-weight:bold">Entity</div>
</div>
<div class="a" style="left:213px;top:69px;width:100px;height:55px;overflow:hidden">
<div class="a" style="left:-12.00px;top:6.89px;font-size:11.00px;line-height:11.00px;color:#555;letter-spacing:0.371px">Valid</div>
<div class="a" style="left:-12.00px;top:22.89px;font-size:11.00px;line-height:11.00px;color:#555;letter-spacing:0.391px">Error</div>
<div class="a" style="left:-12.00px;top:38.69px;font-size:11.00px;line-height:11.00px;color:#555;letter-spacing:0.445px">Empty</div>
</div>
<div class="a" style="left:302.30px;top:75.89px;font-size:11.00px;line-height:11.00px;color:#555;letter-spacing:0.141px">100%</div>
<div class="a" style="left:314.78px;top:91.89px;font-size:11.00px;line-height:11.00px;color:#555;letter-spacing:0.159px">0%</div>
<div class="a" style="left:314.78px;top:107.69px;font-size:11.00px;line-height:11.00px;color:#555;letter-spacing:0.159px">0%</div>
<div class="a" style="left:340px;top:65px;width:159px;height:4px;background:#595959"></div>
<div class="a" style="left:340px;top:65px;width:107px;height:4px;background:#0fa696"></div>
<div class="a" style="left:481px;top:46px;width:16px;height:16px;border:1px solid #9a9a9a;background:#fff"><svg style="position:absolute;left:3px;top:5px" width="8" height="5"><path d="M0 0H8L4 4.5Z" fill="#555"/></svg></div>
<svg class="a" style="left:342px;top:45px" width="18" height="17" viewBox="0 0 18 17"><text x="0" y="13" font-size="11" fill="#333" font-family="Liberation Sans">A</text><text x="6.5" y="8" font-size="10" fill="#333" font-family="Liberation Sans">B</text><text x="11" y="16" font-size="11" fill="#333" font-family="Liberation Sans">C</text></svg>
<div class="a" style="left:364.50px;top:48.69px;font-size:11.00px;line-height:11.00px;color:#3c3c3c;letter-spacing:-0.375px;font-weight:bold">Code</div>
<div class="a" style="left:348px;top:78px;width:6px;height:6px;border-radius:50%;background:#0fa696"></div>
<div class="a" style="left:360.30px;top:75.89px;font-size:11.00px;line-height:11.00px;color:#555;letter-spacing:0.371px">Valid</div>
<div class="a" style="left:348px;top:94px;width:6px;height:6px;border-radius:50%;background:#ee5b55"></div>
<div class="a" style="left:360.30px;top:91.89px;font-size:11.00px;line-height:11.00px;color:#555;letter-spacing:0.391px">Error</div>
<div class="a" style="left:348px;top:110px;width:6px;height:6px;border-radius:50%;background:#555"></div>
<div class="a" style="left:360.30px;top:107.69px;font-size:11.00px;line-height:11.00px;color:#555;letter-spacing:0.445px">Empty</div>
<div class="a" style="left:468.54px;top:75.89px;font-size:11.00px;line-height:11.00px;color:#555;letter-spacing:0.147px">67%</div>
<div class="a" style="left:474.78px;top:91.89px;font-size:11.00px;line-height:11.00px;color:#555;letter-spacing:0.159px">0%</div>
<div class="a" style="left:468.54px;top:107.69px;font-size:11.00px;line-height:11.00px;color:#555;letter-spacing:0.147px">33%</div>
<div class="a" style="left:500px;top:65px;width:159px;height:4px;background:#595959"></div>
<div class="a" style="left:500px;top:65px;width:159px;height:4px;background:#0fa696"></div>
<div class="a" style="left:641px;top:46px;width:16px;height:16px;border:1px solid #9a9a9a;background:#fff"><svg style="position:absolute;left:3px;top:5px" width="8" height="5"><path d="M0 0H8L4 4.5Z" fill="#555"/></svg></div>
<svg class="a" style="left:502px;top:45px" width="18" height="17" viewBox="0 0 18 17"><text x="0" y="13" font-size="11" fill="#333" font-family="Liberation Sans">1</text><text x="5.5" y="8" font-size="10" fill="#333" font-family="Liberation Sans">2</text><text x="11" y="16" font-size="11" fill="#333" font-family="Liberation Sans">3</text></svg>
<div class="a" style="left:524.50px;top:48.69px;font-size:11.00px;line-height:11.00px;color:#3c3c3c;letter-spacing:-0.387px;font-weight:bold">Year</div>
<div class="a" style="left:508px;top:78px;width:6px;height:6px;border-radius:50%;background:#0fa696"></div>
<div class="a" style="left:520.30px;top:75.89px;font-size:11.00px;line-height:11.00px;color:#555;letter-spacing:0.371px">Valid</div>
<div class="a" style="left:508px;top:94px;width:6px;height:6px;border-radius:50%;background:#ee5b55"></div>
<div class="a" style="left:520.30px;top:91.89px;font-size:11.00px;line-height:11.00px;color:#555;letter-spacing:0.391px">Error</div>
<div class="a" style="left:508px;top:110px;width:6px;height:6px;border-radius:50%;background:#555"></div>
<div class="a" style="left:520.30px;top:107.69px;font-size:11.00px;line-height:11.00px;color:#555;letter-spacing:0.445px">Empty</div>
<div class="a" style="left:622.30px;top:75.89px;font-size:11.00px;line-height:11.00px;color:#555;letter-spacing:0.141px">100%</div>
<div class="a" style="left:634.78px;top:91.89px;font-size:11.00px;line-height:11.00px;color:#555;letter-spacing:0.159px">0%</div>
<div class="a" style="left:634.78px;top:107.69px;font-size:11.00px;line-height:11.00px;color:#555;letter-spacing:0.159px">0%</div>
<div class="a" style="left:660px;top:65px;width:277px;height:4px;background:#595959"></div>
<div class="a" style="left:660px;top:65px;width:11px;height:4px;background:#0fa696"></div>
<div class="a" style="left:919px;top:46px;width:16px;height:16px;border:1px solid #9a9a9a;background:#fff"><svg style="position:absolute;left:3px;top:5px" width="8" height="5"><path d="M0 0H8L4 4.5Z" fill="#555"/></svg></div>
<svg class="a" style="left:662px;top:45px" width="18" height="17" viewBox="0 0 18 17"><text x="0" y="13" font-size="11" fill="#333" font-family="Liberation Sans">A</text><text x="6.5" y="8" font-size="10" fill="#333" font-family="Liberation Sans">B</text><text x="11" y="16" font-size="11" fill="#333" font-family="Liberation Sans">C</text></svg>
<div class="a" style="left:684.50px;top:48.69px;font-size:11.00px;line-height:11.00px;color:#3c3c3c;letter-spacing:-0.212px;font-weight:bold">Share of population in poverty ($3 a day)</div>
<div class="a" style="left:668px;top:78px;width:6px;height:6px;border-radius:50%;background:#0fa696"></div>
<div class="a" style="left:680.30px;top:75.89px;font-size:11.00px;line-height:11.00px;color:#555;letter-spacing:0.371px">Valid</div>
<div class="a" style="left:668px;top:94px;width:6px;height:6px;border-radius:50%;background:#ee5b55"></div>
<div class="a" style="left:680.30px;top:91.89px;font-size:11.00px;line-height:11.00px;color:#555;letter-spacing:0.391px">Error</div>
<div class="a" style="left:668px;top:110px;width:6px;height:6px;border-radius:50%;background:#555"></div>
<div class="a" style="left:680.30px;top:107.69px;font-size:11.00px;line-height:11.00px;color:#555;letter-spacing:0.445px">Empty</div>
<div class="a" style="left:912.78px;top:75.89px;font-size:11.00px;line-height:11.00px;color:#555;letter-spacing:0.159px">1%</div>
<div class="a" style="left:912.78px;top:91.89px;font-size:11.00px;line-height:11.00px;color:#555;letter-spacing:0.159px">0%</div>
<div class="a" style="left:906.54px;top:107.69px;font-size:11.00px;line-height:11.00px;color:#555;letter-spacing:0.147px">99%</div>
<div class="a" style="left:938px;top:65px;width:159px;height:4px;background:#595959"></div>
<div class="a" style="left:938px;top:65px;width:159px;height:4px;background:#0fa696"></div>
<div class="a" style="left:1079px;top:46px;width:16px;height:16px;border:1px solid #9a9a9a;background:#fff"><svg style="position:absolute;left:3px;top:5px" width="8" height="5"><path d="M0 0H8L4 4.5Z" fill="#555"/></svg></div>
<svg class="a" style="left:940px;top:45px" width="18" height="17" viewBox="0 0 18 17"><text x="0" y="13" font-size="11" fill="#333" font-family="Liberation Sans">1</text><text x="5.5" y="8" font-size="10" fill="#333" font-family="Liberation Sans">2</text><text x="11" y="16" font-size="11" fill="#333" font-family="Liberation Sans">3</text></svg>
<div class="a" style="left:962.50px;top:48.69px;font-size:11.00px;line-height:11.00px;color:#3c3c3c;letter-spacing:-0.283px;font-weight:bold">Population</div>
<div class="a" style="left:946px;top:78px;width:6px;height:6px;border-radius:50%;background:#0fa696"></div>
<div class="a" style="left:958.30px;top:75.89px;font-size:11.00px;line-height:11.00px;color:#555;letter-spacing:0.371px">Valid</div>
<div class="a" style="left:946px;top:94px;width:6px;height:6px;border-radius:50%;background:#ee5b55"></div>
<div class="a" style="left:958.30px;top:91.89px;font-size:11.00px;line-height:11.00px;color:#555;letter-spacing:0.391px">Error</div>
<div class="a" style="left:946px;top:110px;width:6px;height:6px;border-radius:50%;background:#555"></div>
<div class="a" style="left:958.30px;top:107.69px;font-size:11.00px;line-height:11.00px;color:#555;letter-spacing:0.445px">Empty</div>
<div class="a" style="left:1060.30px;top:75.89px;font-size:11.00px;line-height:11.00px;color:#555;letter-spacing:0.141px">100%</div>
<div class="a" style="left:1072.78px;top:91.89px;font-size:11.00px;line-height:11.00px;color:#555;letter-spacing:0.159px">0%</div>
<div class="a" style="left:1072.78px;top:107.69px;font-size:11.00px;line-height:11.00px;color:#555;letter-spacing:0.159px">0%</div>
<div class="a" style="left:1098px;top:65px;width:222px;height:4px;background:#595959"></div>
<div class="a" style="left:1098px;top:65px;width:147px;height:4px;background:#0fa696"></div>
<div class="a" style="left:1302px;top:46px;width:16px;height:16px;border:1px solid #9a9a9a;background:#fff"><svg style="position:absolute;left:3px;top:5px" width="8" height="5"><path d="M0 0H8L4 4.5Z" fill="#555"/></svg></div>
<svg class="a" style="left:1100px;top:45px" width="18" height="17" viewBox="0 0 18 17"><text x="0" y="13" font-size="11" fill="#333" font-family="Liberation Sans">A</text><text x="6.5" y="8" font-size="10" fill="#333" font-family="Liberation Sans">B</text><text x="11" y="16" font-size="11" fill="#333" font-family="Liberation Sans">C</text></svg>
<div class="a" style="left:1122.50px;top:48.69px;font-size:11.00px;line-height:11.00px;color:#3c3c3c;letter-spacing:-0.256px;font-weight:bold">World region according to OWID</div>
<div class="a" style="left:1106px;top:78px;width:6px;height:6px;border-radius:50%;background:#0fa696"></div>
<div class="a" style="left:1118.30px;top:75.89px;font-size:11.00px;line-height:11.00px;color:#555;letter-spacing:0.371px">Valid</div>
<div class="a" style="left:1106px;top:94px;width:6px;height:6px;border-radius:50%;background:#ee5b55"></div>
<div class="a" style="left:1118.30px;top:91.89px;font-size:11.00px;line-height:11.00px;color:#555;letter-spacing:0.391px">Error</div>
<div class="a" style="left:1106px;top:110px;width:6px;height:6px;border-radius:50%;background:#555"></div>
<div class="a" style="left:1118.30px;top:107.69px;font-size:11.00px;line-height:11.00px;color:#555;letter-spacing:0.445px">Empty</div>
<div class="a" style="left:1289.54px;top:75.89px;font-size:11.00px;line-height:11.00px;color:#555;letter-spacing:0.147px">66%</div>
<div class="a" style="left:1295.78px;top:91.89px;font-size:11.00px;line-height:11.00px;color:#555;letter-spacing:0.159px">0%</div>
<div class="a" style="left:1289.54px;top:107.69px;font-size:11.00px;line-height:11.00px;color:#555;letter-spacing:0.147px">34%</div>
<div class="a" style="left:184.00px;top:128.84px;font-size:12.00px;line-height:12.00px;color:#333;width:30px;text-align:center">1</div>
<div class="a" style="left:213px;top:125px;width:126px;height:20px;overflow:hidden">
<div class="a" style="left:-3.50px;top:4.69px;font-size:11.00px;line-height:11.00px;color:#333;letter-spacing:0.608px">nistan</div>
</div>
<div class="a" style="left:343.10px;top:129.69px;font-size:11.00px;line-height:11.00px;color:#333;letter-spacing:-0.971px">AFG</div>
<div class="a" style="left:622.43px;top:129.69px;font-size:11.00px;line-height:11.00px;color:#333;letter-spacing:-0.114px;font-style:italic">-10000</div>
<div class="a" style="left:1063.72px;top:129.69px;font-size:11.00px;line-height:11.00px;color:#333;letter-spacing:-0.061px;font-style:italic">14737</div>
<div class="a" style="left:1101.00px;top:129.69px;font-size:11.00px;line-height:11.00px;color:#333;letter-spacing:-0.525px">Asia</div>
<div class="a" style="left:184.00px;top:149.84px;font-size:12.00px;line-height:12.00px;color:#333;width:30px;text-align:center">2</div>
<div class="a" style="left:213px;top:146px;width:126px;height:20px;overflow:hidden">
<div class="a" style="left:-3.50px;top:4.69px;font-size:11.00px;line-height:11.00px;color:#333;letter-spacing:0.608px">nistan</div>
</div>
<div class="a" style="left:343.10px;top:150.69px;font-size:11.00px;line-height:11.00px;color:#333;letter-spacing:-0.971px">AFG</div>
<div class="a" style="left:628.43px;top:150.69px;font-size:11.00px;line-height:11.00px;color:#333;letter-spacing:-0.113px;font-style:italic">-9000</div>
<div class="a" style="left:1063.72px;top:150.69px;font-size:11.00px;line-height:11.00px;color:#333;letter-spacing:-0.061px;font-style:italic">20405</div>
<div class="a" style="left:1101.00px;top:150.69px;font-size:11.00px;line-height:11.00px;color:#333;letter-spacing:-0.525px">Asia</div>
<div class="a" style="left:184.00px;top:170.84px;font-size:12.00px;line-height:12.00px;color:#333;width:30px;text-align:center">3</div>
<div class="a" style="left:213px;top:167px;width:126px;height:20px;overflow:hidden">
<div class="a" style="left:-3.50px;top:4.69px;font-size:11.00px;line-height:11.00px;color:#333;letter-spacing:0.608px">nistan</div>
</div>
<div class="a" style="left:343.10px;top:171.69px;font-size:11.00px;line-height:11.00px;color:#333;letter-spacing:-0.971px">AFG</div>
<div class="a" style="left:628.43px;top:171.69px;font-size:11.00px;line-height:11.00px;color:#333;letter-spacing:-0.113px;font-style:italic">-8000</div>
<div class="a" style="left:1063.72px;top:171.69px;font-size:11.00px;line-height:11.00px;color:#333;letter-spacing:-0.061px;font-style:italic">28253</div>
<div class="a" style="left:1101.00px;top:171.69px;font-size:11.00px;line-height:11.00px;color:#333;letter-spacing:-0.525px">Asia</div>
<div class="a" style="left:184.00px;top:191.84px;font-size:12.00px;line-height:12.00px;color:#333;width:30px;text-align:center">4</div>
<div class="a" style="left:213px;top:188px;width:126px;height:20px;overflow:hidden">
<div class="a" style="left:-3.50px;top:4.69px;font-size:11.00px;line-height:11.00px;color:#333;letter-spacing:0.608px">nistan</div>
</div>
<div class="a" style="left:343.10px;top:192.69px;font-size:11.00px;line-height:11.00px;color:#333;letter-spacing:-0.971px">AFG</div>
<div class="a" style="left:628.43px;top:192.69px;font-size:11.00px;line-height:11.00px;color:#333;letter-spacing:-0.113px;font-style:italic">-7000</div>
<div class="a" style="left:1063.72px;top:192.69px;font-size:11.00px;line-height:11.00px;color:#333;letter-spacing:-0.061px;font-style:italic">39120</div>
<div class="a" style="left:1101.00px;top:192.69px;font-size:11.00px;line-height:11.00px;color:#333;letter-spacing:-0.525px">Asia</div>
<div class="a" style="left:184.00px;top:212.84px;font-size:12.00px;line-height:12.00px;color:#333;width:30px;text-align:center">5</div>
<div class="a" style="left:213px;top:209px;width:126px;height:20px;overflow:hidden">
<div class="a" style="left:-3.50px;top:4.69px;font-size:11.00px;line-height:11.00px;color:#333;letter-spacing:0.608px">nistan</div>
</div>
<div class="a" style="left:343.10px;top:213.69px;font-size:11.00px;line-height:11.00px;color:#333;letter-spacing:-0.971px">AFG</div>
<div class="a" style="left:628.43px;top:213.69px;font-size:11.00px;line-height:11.00px;color:#333;letter-spacing:-0.113px;font-style:italic">-6000</div>
<div class="a" style="left:1063.72px;top:213.69px;font-size:11.00px;line-height:11.00px;color:#333;letter-spacing:-0.061px;font-style:italic">54166</div>
<div class="a" style="left:1101.00px;top:213.69px;font-size:11.00px;line-height:11.00px;color:#333;letter-spacing:-0.525px">Asia</div>
<div class="a" style="left:184.00px;top:233.84px;font-size:12.00px;line-height:12.00px;color:#333;width:30px;text-align:center">6</div>
<div class="a" style="left:213px;top:230px;width:126px;height:20px;overflow:hidden">
<div class="a" style="left:-3.50px;top:4.69px;font-size:11.00px;line-height:11.00px;color:#333;letter-spacing:0.608px">nistan</div>
</div>
<div class="a" style="left:343.10px;top:234.69px;font-size:11.00px;line-height:11.00px;color:#333;letter-spacing:-0.971px">AFG</div>
<div class="a" style="left:628.43px;top:234.69px;font-size:11.00px;line-height:11.00px;color:#333;letter-spacing:-0.113px;font-style:italic">-5000</div>
<div class="a" style="left:1063.72px;top:234.69px;font-size:11.00px;line-height:11.00px;color:#333;letter-spacing:-0.061px;font-style:italic">75000</div>
<div class="a" style="left:1101.00px;top:234.69px;font-size:11.00px;line-height:11.00px;color:#333;letter-spacing:-0.525px">Asia</div>
<div class="a" style="left:184.00px;top:254.84px;font-size:12.00px;line-height:12.00px;color:#333;width:30px;text-align:center">7</div>
<div class="a" style="left:213px;top:251px;width:126px;height:20px;overflow:hidden">
<div class="a" style="left:-3.50px;top:4.69px;font-size:11.00px;line-height:11.00px;color:#333;letter-spacing:0.608px">nistan</div>
</div>
<div class="a" style="left:343.10px;top:255.69px;font-size:11.00px;line-height:11.00px;color:#333;letter-spacing:-0.971px">AFG</div>
<div class="a" style="left:628.43px;top:255.69px;font-size:11.00px;line-height:11.00px;color:#333;letter-spacing:-0.113px;font-style:italic">-4000</div>
<div class="a" style="left:1057.66px;top:255.69px;font-size:11.00px;line-height:11.00px;color:#333;letter-spacing:-0.061px;font-style:italic">306250</div>
<div class="a" style="left:1101.00px;top:255.69px;font-size:11.00px;line-height:11.00px;color:#333;letter-spacing:-0.525px">Asia</div>
<div class="a" style="left:184.00px;top:275.84px;font-size:12.00px;line-height:12.00px;color:#333;width:30px;text-align:center">8</div>
<div class="a" style="left:213px;top:272px;width:126px;height:20px;overflow:hidden">
<div class="a" style="left:-3.50px;top:4.69px;font-size:11.00px;line-height:11.00px;color:#333;letter-spacing:0.608px">nistan</div>
</div>
<div class="a" style="left:343.10px;top:276.69px;font-size:11.00px;line-height:11.00px;color:#333;letter-spacing:-0.971px">AFG</div>
<div class="a" style="left:628.43px;top:276.69px;font-size:11.00px;line-height:11.00px;color:#333;letter-spacing:-0.113px;font-style:italic">-3000</div>
<div class="a" style="left:1057.66px;top:276.69px;font-size:11.00px;line-height:11.00px;color:#333;letter-spacing:-0.061px;font-style:italic">537500</div>
<div class="a" style="left:1101.00px;top:276.69px;font-size:11.00px;line-height:11.00px;color:#333;letter-spacing:-0.525px">Asia</div>
<div class="a" style="left:184.00px;top:296.84px;font-size:12.00px;line-height:12.00px;color:#333;width:30px;text-align:center">9</div>
<div class="a" style="left:213px;top:293px;width:126px;height:20px;overflow:hidden">
<div class="a" style="left:-3.50px;top:4.69px;font-size:11.00px;line-height:11.00px;color:#333;letter-spacing:0.608px">nistan</div>
</div>
<div class="a" style="left:343.10px;top:297.69px;font-size:11.00px;line-height:11.00px;color:#333;letter-spacing:-0.971px">AFG</div>
<div class="a" style="left:628.43px;top:297.69px;font-size:11.00px;line-height:11.00px;color:#333;letter-spacing:-0.113px;font-style:italic">-2000</div>
<div class="a" style="left:1057.66px;top:297.69px;font-size:11.00px;line-height:11.00px;color:#333;letter-spacing:-0.061px;font-style:italic">768750</div>
<div class="a" style="left:1101.00px;top:297.69px;font-size:11.00px;line-height:11.00px;color:#333;letter-spacing:-0.525px">Asia</div>
<div class="a" style="left:184.00px;top:317.84px;font-size:12.00px;line-height:12.00px;color:#333;width:30px;text-align:center">10</div>
<div class="a" style="left:213px;top:314px;width:126px;height:20px;overflow:hidden">
<div class="a" style="left:-3.50px;top:4.69px;font-size:11.00px;line-height:11.00px;color:#333;letter-spacing:0.608px">nistan</div>
</div>
<div class="a" style="left:343.10px;top:318.69px;font-size:11.00px;line-height:11.00px;color:#333;letter-spacing:-0.971px">AFG</div>
<div class="a" style="left:628.43px;top:318.69px;font-size:11.00px;line-height:11.00px;color:#333;letter-spacing:-0.113px;font-style:italic">-1000</div>
<div class="a" style="left:1051.60px;top:318.69px;font-size:11.00px;line-height:11.00px;color:#333;letter-spacing:-0.061px;font-style:italic">1000000</div>
<div class="a" style="left:1101.00px;top:318.69px;font-size:11.00px;line-height:11.00px;color:#333;letter-spacing:-0.525px">Asia</div>
<div class="a" style="left:184.00px;top:338.84px;font-size:12.00px;line-height:12.00px;color:#333;width:30px;text-align:center">11</div>
<div class="a" style="left:213px;top:335px;width:126px;height:20px;overflow:hidden">
<div class="a" style="left:-3.50px;top:4.69px;font-size:11.00px;line-height:11.00px;color:#333;letter-spacing:0.608px">nistan</div>
</div>
<div class="a" style="left:343.10px;top:339.69px;font-size:11.00px;line-height:11.00px;color:#333;letter-spacing:-0.971px">AFG</div>
<div class="a" style="left:649.88px;top:339.69px;font-size:11.00px;line-height:11.00px;color:#333;font-style:italic">0</div>
<div class="a" style="left:1051.60px;top:339.69px;font-size:11.00px;line-height:11.00px;color:#333;letter-spacing:-0.061px;font-style:italic">2000000</div>
<div class="a" style="left:1101.00px;top:339.69px;font-size:11.00px;line-height:11.00px;color:#333;letter-spacing:-0.525px">Asia</div>
<div class="a" style="left:184.00px;top:359.84px;font-size:12.00px;line-height:12.00px;color:#333;width:30px;text-align:center">12</div>
<div class="a" style="left:213px;top:356px;width:126px;height:20px;overflow:hidden">
<div class="a" style="left:-3.50px;top:4.69px;font-size:11.00px;line-height:11.00px;color:#333;letter-spacing:0.608px">nistan</div>
</div>
<div class="a" style="left:343.10px;top:360.69px;font-size:11.00px;line-height:11.00px;color:#333;letter-spacing:-0.971px">AFG</div>
<div class="a" style="left:638.01px;top:360.69px;font-size:11.00px;line-height:11.00px;color:#333;letter-spacing:-0.122px;font-style:italic">100</div>
<div class="a" style="left:1051.60px;top:360.69px;font-size:11.00px;line-height:11.00px;color:#333;letter-spacing:-0.061px;font-style:italic">2250000</div>
<div class="a" style="left:1101.00px;top:360.69px;font-size:11.00px;line-height:11.00px;color:#333;letter-spacing:-0.525px">Asia</div>
<div class="a" style="left:184.00px;top:380.84px;font-size:12.00px;line-height:12.00px;color:#333;width:30px;text-align:center">13</div>
<div class="a" style="left:213px;top:377px;width:126px;height:20px;overflow:hidden">
<div class="a" style="left:-3.50px;top:4.69px;font-size:11.00px;line-height:11.00px;color:#333;letter-spacing:0.608px">nistan</div>
</div>
<div class="a" style="left:343.10px;top:381.69px;font-size:11.00px;line-height:11.00px;color:#333;letter-spacing:-0.971px">AFG</div>
<div class="a" style="left:638.01px;top:381.69px;font-size:11.00px;line-height:11.00px;color:#333;letter-spacing:-0.122px;font-style:italic">200</div>
<div class="a" style="left:1051.60px;top:381.69px;font-size:11.00px;line-height:11.00px;color:#333;letter-spacing:-0.061px;font-style:italic">2500000</div>
<div class="a" style="left:1101.00px;top:381.69px;font-size:11.00px;line-height:11.00px;color:#333;letter-spacing:-0.525px">Asia</div>
<div class="a" style="left:184.00px;top:401.84px;font-size:12.00px;line-height:12.00px;color:#333;width:30px;text-align:center">14</div>
<div class="a" style="left:213px;top:398px;width:126px;height:20px;overflow:hidden">
<div class="a" style="left:-3.50px;top:4.69px;font-size:11.00px;line-height:11.00px;color:#333;letter-spacing:0.608px">nistan</div>
</div>
<div class="a" style="left:343.10px;top:402.69px;font-size:11.00px;line-height:11.00px;color:#333;letter-spacing:-0.971px">AFG</div>
<div class="a" style="left:638.01px;top:402.69px;font-size:11.00px;line-height:11.00px;color:#333;letter-spacing:-0.122px;font-style:italic">300</div>
<div class="a" style="left:1051.60px;top:402.69px;font-size:11.00px;line-height:11.00px;color:#333;letter-spacing:-0.061px;font-style:italic">2500000</div>
<div class="a" style="left:1101.00px;top:402.69px;font-size:11.00px;line-height:11.00px;color:#333;letter-spacing:-0.525px">Asia</div>
<div class="a" style="left:184.00px;top:422.84px;font-size:12.00px;line-height:12.00px;color:#333;width:30px;text-align:center">15</div>
<div class="a" style="left:213px;top:419px;width:126px;height:20px;overflow:hidden">
<div class="a" style="left:-3.50px;top:4.69px;font-size:11.00px;line-height:11.00px;color:#333;letter-spacing:0.608px">nistan</div>
</div>
<div class="a" style="left:343.10px;top:423.69px;font-size:11.00px;line-height:11.00px;color:#333;letter-spacing:-0.971px">AFG</div>
<div class="a" style="left:638.01px;top:423.69px;font-size:11.00px;line-height:11.00px;color:#333;letter-spacing:-0.122px;font-style:italic">400</div>
<div class="a" style="left:1051.60px;top:423.69px;font-size:11.00px;line-height:11.00px;color:#333;letter-spacing:-0.061px;font-style:italic">2500000</div>
<div class="a" style="left:1101.00px;top:423.69px;font-size:11.00px;line-height:11.00px;color:#333;letter-spacing:-0.525px">Asia</div>
<div class="a" style="left:184.00px;top:443.84px;font-size:12.00px;line-height:12.00px;color:#333;width:30px;text-align:center">16</div>
<div class="a" style="left:213px;top:440px;width:126px;height:20px;overflow:hidden">
<div class="a" style="left:-3.50px;top:4.69px;font-size:11.00px;line-height:11.00px;color:#333;letter-spacing:0.608px">nistan</div>
</div>
<div class="a" style="left:343.10px;top:444.69px;font-size:11.00px;line-height:11.00px;color:#333;letter-spacing:-0.971px">AFG</div>
<div class="a" style="left:638.01px;top:444.69px;font-size:11.00px;line-height:11.00px;color:#333;letter-spacing:-0.122px;font-style:italic">500</div>
<div class="a" style="left:1051.60px;top:444.69px;font-size:11.00px;line-height:11.00px;color:#333;letter-spacing:-0.061px;font-style:italic">2500000</div>
<div class="a" style="left:1101.00px;top:444.69px;font-size:11.00px;line-height:11.00px;color:#333;letter-spacing:-0.525px">Asia</div>
<div class="a" style="left:184.00px;top:464.84px;font-size:12.00px;line-height:12.00px;color:#333;width:30px;text-align:center">17</div>
<div class="a" style="left:213px;top:461px;width:126px;height:20px;overflow:hidden">
<div class="a" style="left:-3.50px;top:4.69px;font-size:11.00px;line-height:11.00px;color:#333;letter-spacing:0.608px">nistan</div>
</div>
<div class="a" style="left:343.10px;top:465.69px;font-size:11.00px;line-height:11.00px;color:#333;letter-spacing:-0.971px">AFG</div>
<div class="a" style="left:638.01px;top:465.69px;font-size:11.00px;line-height:11.00px;color:#333;letter-spacing:-0.122px;font-style:italic">600</div>
<div class="a" style="left:1051.60px;top:465.69px;font-size:11.00px;line-height:11.00px;color:#333;letter-spacing:-0.061px;font-style:italic">2500000</div>
<div class="a" style="left:1101.00px;top:465.69px;font-size:11.00px;line-height:11.00px;color:#333;letter-spacing:-0.525px">Asia</div>
<div class="a" style="left:184.00px;top:485.84px;font-size:12.00px;line-height:12.00px;color:#333;width:30px;text-align:center">18</div>
<div class="a" style="left:213px;top:482px;width:126px;height:20px;overflow:hidden">
<div class="a" style="left:-3.50px;top:4.69px;font-size:11.00px;line-height:11.00px;color:#333;letter-spacing:0.608px">nistan</div>
</div>
<div class="a" style="left:343.10px;top:486.69px;font-size:11.00px;line-height:11.00px;color:#333;letter-spacing:-0.971px">AFG</div>
<div class="a" style="left:638.01px;top:486.69px;font-size:11.00px;line-height:11.00px;color:#333;letter-spacing:-0.122px;font-style:italic">700</div>
<div class="a" style="left:1051.60px;top:486.69px;font-size:11.00px;line-height:11.00px;color:#333;letter-spacing:-0.061px;font-style:italic">2425000</div>
<div class="a" style="left:1101.00px;top:486.69px;font-size:11.00px;line-height:11.00px;color:#333;letter-spacing:-0.525px">Asia</div>
<div class="a" style="left:184.00px;top:506.84px;font-size:12.00px;line-height:12.00px;color:#333;width:30px;text-align:center">19</div>
<div class="a" style="left:213px;top:503px;width:126px;height:20px;overflow:hidden">
<div class="a" style="left:-3.50px;top:4.69px;font-size:11.00px;line-height:11.00px;color:#333;letter-spacing:0.608px">nistan</div>
</div>
<div class="a" style="left:343.10px;top:507.69px;font-size:11.00px;line-height:11.00px;color:#333;letter-spacing:-0.971px">AFG</div>
<div class="a" style="left:638.01px;top:507.69px;font-size:11.00px;line-height:11.00px;color:#333;letter-spacing:-0.122px;font-style:italic">800</div>
<div class="a" style="left:1051.60px;top:507.69px;font-size:11.00px;line-height:11.00px;color:#333;letter-spacing:-0.061px;font-style:italic">2350000</div>
<div class="a" style="left:1101.00px;top:507.69px;font-size:11.00px;line-height:11.00px;color:#333;letter-spacing:-0.525px">Asia</div>
<div class="a" style="left:184.00px;top:527.84px;font-size:12.00px;line-height:12.00px;color:#333;width:30px;text-align:center">20</div>
<div class="a" style="left:213px;top:524px;width:126px;height:20px;overflow:hidden">
<div class="a" style="left:-3.50px;top:4.69px;font-size:11.00px;line-height:11.00px;color:#333;letter-spacing:0.608px">nistan</div>
</div>
<div class="a" style="left:343.10px;top:528.69px;font-size:11.00px;line-height:11.00px;color:#333;letter-spacing:-0.971px">AFG</div>
<div class="a" style="left:638.01px;top:528.69px;font-size:11.00px;line-height:11.00px;color:#333;letter-spacing:-0.122px;font-style:italic">900</div>
<div class="a" style="left:1051.60px;top:528.69px;font-size:11.00px;line-height:11.00px;color:#333;letter-spacing:-0.061px;font-style:italic">2300000</div>
<div class="a" style="left:1101.00px;top:528.69px;font-size:11.00px;line-height:11.00px;color:#333;letter-spacing:-0.525px">Asia</div>
<div class="a" style="left:184.00px;top:548.84px;font-size:12.00px;line-height:12.00px;color:#333;width:30px;text-align:center">21</div>
<div class="a" style="left:213px;top:545px;width:126px;height:20px;overflow:hidden">
<div class="a" style="left:-3.50px;top:4.69px;font-size:11.00px;line-height:11.00px;color:#333;letter-spacing:0.608px">nistan</div>
</div>
<div class="a" style="left:343.10px;top:549.69px;font-size:11.00px;line-height:11.00px;color:#333;letter-spacing:-0.971px">AFG</div>
<div class="a" style="left:632.02px;top:549.69px;font-size:11.00px;line-height:11.00px;color:#333;letter-spacing:-0.122px;font-style:italic">1000</div>
<div class="a" style="left:1051.60px;top:549.69px;font-size:11.00px;line-height:11.00px;color:#333;letter-spacing:-0.061px;font-style:italic">2250000</div>
<div class="a" style="left:1101.00px;top:549.69px;font-size:11.00px;line-height:11.00px;color:#333;letter-spacing:-0.525px">Asia</div>
<div class="a" style="left:184.00px;top:569.84px;font-size:12.00px;line-height:12.00px;color:#333;width:30px;text-align:center">22</div>
<div class="a" style="left:213px;top:566px;width:126px;height:20px;overflow:hidden">
<div class="a" style="left:-3.50px;top:4.69px;font-size:11.00px;line-height:11.00px;color:#333;letter-spacing:0.608px">nistan</div>
</div>
<div class="a" style="left:343.10px;top:570.69px;font-size:11.00px;line-height:11.00px;color:#333;letter-spacing:-0.971px">AFG</div>
<div class="a" style="left:632.82px;top:570.69px;font-size:11.00px;line-height:11.00px;color:#333;letter-spacing:-0.118px;font-style:italic">1100</div>
<div class="a" style="left:1051.60px;top:570.69px;font-size:11.00px;line-height:11.00px;color:#333;letter-spacing:-0.061px;font-style:italic">2375000</div>
<div class="a" style="left:1101.00px;top:570.69px;font-size:11.00px;line-height:11.00px;color:#333;letter-spacing:-0.525px">Asia</div>
<div class="a" style="left:184.00px;top:590.84px;font-size:12.00px;line-height:12.00px;color:#333;width:30px;text-align:center">23</div>
<div class="a" style="left:213px;top:587px;width:126px;height:20px;overflow:hidden">
<div class="a" style="left:-3.50px;top:4.69px;font-size:11.00px;line-height:11.00px;color:#333;letter-spacing:0.608px">nistan</div>
</div>
<div class="a" style="left:343.10px;top:591.69px;font-size:11.00px;line-height:11.00px;color:#333;letter-spacing:-0.971px">AFG</div>
<div class="a" style="left:632.02px;top:591.69px;font-size:11.00px;line-height:11.00px;color:#333;letter-spacing:-0.122px;font-style:italic">1200</div>
<div class="a" style="left:1051.60px;top:591.69px;font-size:11.00px;line-height:11.00px;color:#333;letter-spacing:-0.061px;font-style:italic">2500000</div>
<div class="a" style="left:1101.00px;top:591.69px;font-size:11.00px;line-height:11.00px;color:#333;letter-spacing:-0.525px">Asia</div>
<div class="a" style="left:184.00px;top:611.84px;font-size:12.00px;line-height:12.00px;color:#333;width:30px;text-align:center">24</div>
<div class="a" style="left:213px;top:608px;width:126px;height:20px;overflow:hidden">
<div class="a" style="left:-3.50px;top:4.69px;font-size:11.00px;line-height:11.00px;color:#333;letter-spacing:0.608px">nistan</div>
</div>
<div class="a" style="left:343.10px;top:612.69px;font-size:11.00px;line-height:11.00px;color:#333;letter-spacing:-0.971px">AFG</div>
<div class="a" style="left:632.02px;top:612.69px;font-size:11.00px;line-height:11.00px;color:#333;letter-spacing:-0.122px;font-style:italic">1300</div>
<div class="a" style="left:1051.60px;top:612.69px;font-size:11.00px;line-height:11.00px;color:#333;letter-spacing:-0.061px;font-style:italic">1750000</div>
<div class="a" style="left:1101.00px;top:612.69px;font-size:11.00px;line-height:11.00px;color:#333;letter-spacing:-0.525px">Asia</div>
<div class="a" style="left:184.00px;top:632.84px;font-size:12.00px;line-height:12.00px;color:#333;width:30px;text-align:center">25</div>
<div class="a" style="left:213px;top:629px;width:126px;height:20px;overflow:hidden">
<div class="a" style="left:-3.50px;top:4.69px;font-size:11.00px;line-height:11.00px;color:#333;letter-spacing:0.608px">nistan</div>
</div>
<div class="a" style="left:343.10px;top:633.69px;font-size:11.00px;line-height:11.00px;color:#333;letter-spacing:-0.971px">AFG</div>
<div class="a" style="left:632.02px;top:633.69px;font-size:11.00px;line-height:11.00px;color:#333;letter-spacing:-0.122px;font-style:italic">1400</div>
<div class="a" style="left:1051.60px;top:633.69px;font-size:11.00px;line-height:11.00px;color:#333;letter-spacing:-0.061px;font-style:italic">1875000</div>
<div class="a" style="left:1101.00px;top:633.69px;font-size:11.00px;line-height:11.00px;color:#333;letter-spacing:-0.525px">Asia</div>
<div class="a" style="left:184.00px;top:653.84px;font-size:12.00px;line-height:12.00px;color:#333;width:30px;text-align:center">26</div>
<div class="a" style="left:213px;top:650px;width:126px;height:20px;overflow:hidden">
<div class="a" style="left:-3.50px;top:4.69px;font-size:11.00px;line-height:11.00px;color:#333;letter-spacing:0.608px">nistan</div>
</div>
<div class="a" style="left:343.10px;top:654.69px;font-size:11.00px;line-height:11.00px;color:#333;letter-spacing:-0.971px">AFG</div>
<div class="a" style="left:632.02px;top:654.69px;font-size:11.00px;line-height:11.00px;color:#333;letter-spacing:-0.122px;font-style:italic">1500</div>
<div class="a" style="left:1051.60px;top:654.69px;font-size:11.00px;line-height:11.00px;color:#333;letter-spacing:-0.061px;font-style:italic">2000000</div>
<div class="a" style="left:1101.00px;top:654.69px;font-size:11.00px;line-height:11.00px;color:#333;letter-spacing:-0.525px">Asia</div>
<div class="a" style="left:184.00px;top:674.84px;font-size:12.00px;line-height:12.00px;color:#333;width:30px;text-align:center">27</div>
<div class="a" style="left:213px;top:671px;width:126px;height:20px;overflow:hidden">
<div class="a" style="left:-3.50px;top:4.69px;font-size:11.00px;line-height:11.00px;color:#333;letter-spacing:0.608px">nistan</div>
</div>
<div class="a" style="left:343.10px;top:675.69px;font-size:11.00px;line-height:11.00px;color:#333;letter-spacing:-0.971px">AFG</div>
<div class="a" style="left:632.02px;top:675.69px;font-size:11.00px;line-height:11.00px;color:#333;letter-spacing:-0.122px;font-style:italic">1600</div>
<div class="a" style="left:1051.60px;top:675.69px;font-size:11.00px;line-height:11.00px;color:#333;letter-spacing:-0.061px;font-style:italic">2500000</div>
<div class="a" style="left:1101.00px;top:675.69px;font-size:11.00px;line-height:11.00px;color:#333;letter-spacing:-0.525px">Asia</div>
<div class="a" style="left:184.00px;top:695.84px;font-size:12.00px;line-height:12.00px;color:#333;width:30px;text-align:center">28</div>
<div class="a" style="left:213px;top:692px;width:1117px;height:17px;background:#f0f0f0"></div>
<div class="a" style="left:279px;top:694px;width:992px;height:15px;background:#cdcdcd"></div>
<svg class="a" style="left:230px;top:695px" width="11" height="13" viewBox="0 0 11 13"><path d="M9 1L3 6.5L9 12" stroke="#555" stroke-width="2.8" fill="none"/></svg>
<svg class="a" style="left:1286px;top:695px" width="11" height="13" viewBox="0 0 11 13"><path d="M2 1L8 6.5L2 12" stroke="#555" stroke-width="2.8" fill="none"/></svg>
<div class="a" style="left:1313px;top:125px;width:17px;height:584px;background:#f0f0f0"></div>
<div class="a" style="left:1314px;top:159px;width:15px;height:270px;background:#cdcdcd"></div>
<svg class="a" style="left:1315px;top:140px" width="13" height="11" viewBox="0 0 13 11"><path d="M1 9L6.5 3L12 9" stroke="#555" stroke-width="2.8" fill="none"/></svg>
<svg class="a" style="left:1315px;top:666px" width="13" height="11" viewBox="0 0 13 11"><path d="M1 2L6.5 8L12 2" stroke="#555" stroke-width="2.8" fill="none"/></svg>
<div class="a" style="left:1320px;top:43px;width:1px;height:82px;background:#d6d6d6"></div>
<div class="a" style="left:1313px;top:124px;width:8px;height:1px;background:#e1e1e1"></div>
<div class="a" style="left:1334px;top:0;width:1px;height:710px;background:#d4d4d4"></div>
<div class="a" style="left:1349.40px;top:21.74px;font-size:18.50px;line-height:18.50px;color:#668a78;letter-spacing:-0.026px">Query Settings</div>
<svg class="a" style="left:1562px;top:25px" width="12" height="12"><path d="M0.5 0.5L11.5 11.5M11.5 0.5L0.5 11.5" stroke="#555" stroke-width="1.2"/></svg>
<svg class="a" style="left:1345px;top:66px" width="7" height="7"><path d="M6 0V6H0Z" fill="#444"/></svg>
<div class="a" style="left:1358.50px;top:62.20px;font-size:13.00px;line-height:13.00px;color:#2b6e4e;font-weight:bold;transform:scaleX(0.8234);transform-origin:0 0">PROPERTIES</div>
<div class="a" style="left:1358.50px;top:83.07px;font-size:11.50px;line-height:11.50px;color:#333;letter-spacing:0.081px">Name</div>
<div class="a" style="left:1358px;top:99px;width:218px;height:21px;border:1px solid #a8a8a8;background:#fff"></div>
<div class="a" style="left:1364.60px;top:103.97px;font-size:11.50px;line-height:11.50px;color:#333;letter-spacing:0.058px">share-of-population-in-extreme-poverty</div>
<div class="a" style="left:1358.50px;top:129.77px;font-size:11.50px;line-height:11.50px;color:#3a64a8;letter-spacing:0.115px">All Properties</div>
<svg class="a" style="left:1345px;top:167px" width="7" height="7"><path d="M6 0V6H0Z" fill="#444"/></svg>
<div class="a" style="left:1358.50px;top:163.00px;font-size:13.00px;line-height:13.00px;color:#2b6e4e;font-weight:bold;transform:scaleX(0.8286);transform-origin:0 0">APPLIED STEPS</div>
<div class="a" style="left:1358px;top:184px;width:218px;height:506px;border:1px solid #b8b8b8;background:#fff"></div>
<div class="a" style="left:1359px;top:224px;width:216px;height:20px;background:#d5efe2"></div>
<div class="a" style="left:1379.30px;top:189.27px;font-size:11.50px;line-height:11.50px;color:#333;letter-spacing:-0.173px">Source</div>
<svg class="a" style="left:1555px;top:189px" width="12" height="12" viewBox="0 0 12 12"><path d="M6 0.5V11.5M0.5 6H11.5M2 2L10 10M10 2L2 10" stroke="#aaa" stroke-width="2"/><circle cx="6" cy="6" r="3.3" fill="#aaa"/><circle cx="6" cy="6" r="1.5" fill="#fff"/></svg>
<div class="a" style="left:1379.30px;top:209.27px;font-size:11.50px;line-height:11.50px;color:#333;letter-spacing:0.149px">Promoted Headers</div>
<svg class="a" style="left:1555px;top:209px" width="12" height="12" viewBox="0 0 12 12"><path d="M6 0.5V11.5M0.5 6H11.5M2 2L10 10M10 2L2 10" stroke="#aaa" stroke-width="2"/><circle cx="6" cy="6" r="3.3" fill="#aaa"/><circle cx="6" cy="6" r="1.5" fill="#fff"/></svg>
<div class="a" style="left:1379.30px;top:229.27px;font-size:11.50px;line-height:11.50px;color:#333;letter-spacing:0.083px">Changed Type</div>
<svg class="a" style="left:1364px;top:230px" width="11" height="10"><path d="M0.5 0.5L10.5 9.5M10.5 0.5L0.5 9.5" stroke="#444" stroke-width="1.3"/></svg>
<div class="a" style="left:1295.30px;top:648.99px;font-size:19.50px;line-height:19.50px;color:rgba(120,120,120,0.6);letter-spacing:0.194px">Activate Windows</div>
<div class="a" style="left:1295.30px;top:673.73px;font-size:14.50px;line-height:14.50px;color:rgba(120,120,120,0.6);letter-spacing:0.203px">Go to Settings to activate Windows.</div>
</div>
<div class="a" id="status">
<div class="a" style="left:5.00px;top:6.69px;font-size:11.00px;line-height:11.00px;color:#fff;letter-spacing:-0.367px">6 COLUMNS, 999+ ROWS</div>
<div class="a" style="left:145.00px;top:6.69px;font-size:11.00px;line-height:11.00px;color:#fff;letter-spacing:0.052px">Column profiling based on top 1000 rows</div>
<div class="a" style="left:1414.00px;top:6.69px;font-size:11.00px;line-height:11.00px;color:#fff;letter-spacing:-0.426px">PREVIEW DOWNLOADED AT 8:24 PM</div>
</div><div class="a" id="task" style="background:#1c1c1c">
<div class="a" style="left:661px;top:0;width:504px;height:30px;background:linear-gradient(90deg,#201a45 0%,#221b48 45%,#1c1c1c 75%)"></div>
<svg class="a" style="left:10px;top:7px" width="17" height="17" viewBox="0 0 17 17"><path d="M0 2.3L7 1.3V8H0ZM8 1.2L17 0V8H8ZM0 9H7V15.7L0 14.7ZM8 9H17V17L8 15.8Z" fill="#fff"/></svg>
<div class="a" style="left:36px;top:0;width:257px;height:30px;background:#f0f0f0;border-top:1px solid #ddd"></div>
<svg class="a" style="left:48px;top:7px" width="17" height="17" viewBox="0 0 17 17"><circle cx="10.5" cy="6.5" r="5" fill="none" stroke="#222" stroke-width="1.4"/><path d="M7 10L1 16" stroke="#222" stroke-width="1.6"/></svg>
<div class="a" style="left:76px;top:7px;font-size:14.5px;color:#222;line-height:17px">Search</div>
<svg class="a" style="left:304px;top:8px" width="17" height="15" viewBox="0 0 17 15"><rect x="1.5" y="3.5" width="10" height="8" fill="none" stroke="#fff" stroke-width="1.3"/><path d="M0 1H13M0 14H13M15 0V3M15 5V10M15 12V15" stroke="#fff" stroke-width="1.3"/></svg>
<svg class="a" style="left:342px;top:6px" width="18" height="18" viewBox="0 0 18 18"><circle cx="9" cy="9" r="8.5" fill="#1a8ad8"/><path d="M2 11C3 5 9 3 13 6C15 8 14 11 10 11C7 11 7 9 9 8" stroke="#3fd17a" stroke-width="2.5" fill="none"/><circle cx="9" cy="11" r="3" fill="#1b5fb8"/></svg>
<svg class="a" style="left:380px;top:7px" width="15" height="16" viewBox="0 0 15 16"><rect x="0.5" y="3" width="14" height="12.5" rx="1.5" fill="#eee"/><path d="M4.5 3V1.5H10.5V3" stroke="#ccc" fill="none"/><rect x="4" y="6" width="3" height="3" fill="#f25022"/><rect x="8" y="6" width="3" height="3" fill="#7fba00"/><rect x="4" y="10" width="3" height="3" fill="#00a4ef"/><rect x="8" y="10" width="3" height="3" fill="#ffb900"/></svg>
<svg class="a" style="left:416px;top:9px" width="18" height="12" viewBox="0 0 18 12"><path d="M1 10L9 3L17 10M1 10H17" stroke="#2a9d8f" stroke-width="1.2" fill="none"/><path d="M9 3V0" stroke="#e9c46a" stroke-width="1.5"/></svg>
<svg class="a" style="left:453px;top:6px" width="18" height="18" viewBox="0 0 18 18"><circle cx="9" cy="9" r="8.5" fill="#f3a531"/><circle cx="9" cy="9" r="6" fill="#7b3fbf"/><path d="M6 7C6 6 12 6 12 7V10C12 12 9 13.5 9 13.5C9 13.5 6 12 6 10Z" fill="#fff"/></svg>
<svg class="a" style="left:491px;top:6px" width="16" height="18" viewBox="0 0 16 18"><path d="M3 1H13L15 4L13 13L8 17L3 13L1 4Z" fill="#fb542b"/><path d="M5 6L8 9L11 6M6 11L8 13L10 11" stroke="#fff" stroke-width="1.3" fill="none"/></svg>
<svg class="a" style="left:527px;top:6px" width="17" height="18" viewBox="0 0 17 18"><circle cx="8" cy="3.5" r="3" fill="#7b83eb"/><circle cx="14" cy="5" r="2.3" fill="#5059c9"/><rect x="4" y="7" width="9" height="10" rx="2" fill="#7b83eb"/><rect x="12" y="8" width="5" height="7" rx="2" fill="#5059c9"/><rect x="1" y="8" width="7" height="7" fill="#4b53bc"/><text x="4.5" y="14" font-size="6.5" font-weight="bold" fill="#fff" text-anchor="middle" font-family="Liberation Sans">i</text></svg>
<svg class="a" style="left:564px;top:8px" width="18" height="15" viewBox="0 0 18 15"><path d="M0 1H7L8.5 3H18V15H0Z" fill="#f9c23c"/><rect x="0" y="5" width="18" height="10" fill="#ffd75e"/><rect x="6" y="9" width="6" height="6" fill="#2b7bd0"/></svg>
<svg class="a" style="left:601px;top:6px" width="17" height="18" viewBox="0 0 17 18"><g fill="none" stroke="#fff" stroke-width="1.4"><ellipse cx="8.5" cy="9" rx="3.5" ry="7.5"/><ellipse cx="8.5" cy="9" rx="3.5" ry="7.5" transform="rotate(60 8.5 9)"/><ellipse cx="8.5" cy="9" rx="3.5" ry="7.5" transform="rotate(-60 8.5 9)"/></g></svg>
<div class="a" style="left:629px;top:0;width:32px;height:30px;background:#3d3d45"></div>
<svg class="a" style="left:639px;top:7px" width="17" height="16" viewBox="0 0 17 16"><rect x="4" y="0" width="13" height="16" rx="1" fill="#107c41"/><rect x="4" y="0" width="13" height="5" fill="#33c481"/><rect x="4" y="11" width="13" height="5" fill="#185c37"/><rect x="0" y="4" width="9" height="9" rx="1" fill="#0d6b36"/><text x="4.5" y="11" font-size="7" font-weight="bold" fill="#fff" text-anchor="middle" font-family="Liberation Sans">x</text></svg>
<div class="a" style="left:485px;top:28px;width:28px;height:2px;background:#8ab4e0"></div>
<div class="a" style="left:522px;top:28px;width:28px;height:2px;background:#8ab4e0"></div>
<div class="a" style="left:559px;top:28px;width:28px;height:2px;background:#8ab4e0"></div>
<div class="a" style="left:596px;top:28px;width:28px;height:2px;background:#8ab4e0"></div>
<div class="a" style="left:629px;top:28px;width:32px;height:2px;background:#8ab4e0"></div>
<svg class="a" style="left:1169px;top:4px" width="28" height="22" viewBox="0 0 28 22"><path d="M4 10L7 2L11 9Z" fill="#f4a24a"/><ellipse cx="13" cy="16" rx="11" ry="5.5" fill="#c8d8f0"/><circle cx="11" cy="12" r="5" fill="#d4e2f5"/><circle cx="16" cy="12" r="4" fill="#d4e2f5"/><circle cx="19" cy="5" r="4.5" fill="#d13438"/><text x="19" y="8" font-size="7" fill="#fff" text-anchor="middle" font-family="Liberation Sans">1</text></svg>
<div class="a" style="left:1204.00px;top:7.73px;font-size:14.50px;line-height:14.50px;color:#fff;letter-spacing:-1.100px">18°C</div>
<svg class="a" style="left:1240px;top:7px" width="56" height="18" viewBox="0 0 56 18"><g fill="none" stroke="#fff" stroke-width="1.3" stroke-linecap="round"><path d="M2.5 3V12.5"/><path d="M6 12.5H13Q14.5 12.5 14.5 10.5"/><path d="M7 5L12 4.5M7 7L12 6.5"/><path d="M17.5 2.5V12.5H21"/><path d="M22 3V12.5"/><path d="M25 12.5H30Q32 12.5 32 10Q32 7.5 29.5 7.5Q27 7.5 27.5 10.5"/><path d="M38 12.5Q36 12.5 36 16.5M38 12.5H41Q42.5 12.5 42.5 10.5Q42.5 8.5 40.5 8.5Q39 8.5 39 12.5"/><path d="M42.5 12.5H46Q47 12.5 47 10"/><path d="M49 3V12.5"/><path d="M50 12.5H54Q55 12.5 55 10Q55 7 52 7Q50 7 51 9"/></g><g fill="#fff"><circle cx="29.5" cy="4.5" r="1"/><circle cx="45" cy="6.5" r="0.9"/><circle cx="52.5" cy="4.2" r="1"/></g></svg>
<svg class="a" style="left:1312px;top:10px" width="13" height="8"><path d="M1 7L6.5 1.5L12 7" stroke="#fff" stroke-width="1.4" fill="none"/></svg>
<svg class="a" style="left:1334px;top:7px" width="16" height="16" viewBox="0 0 16 16"><circle cx="8" cy="8" r="7.5" fill="#f4c20d"/><circle cx="8" cy="8" r="5.5" fill="#2bb24c"/><path d="M8 4.5V11.5M4.5 8H11.5" stroke="#fff" stroke-width="2"/></svg>
<svg class="a" style="left:1360px;top:7px" width="14" height="16" viewBox="0 0 14 16"><rect x="1" y="3" width="9" height="9" rx="2" fill="none" stroke="#fff" stroke-width="1.3"/><path d="M10 6L13 4V11L10 9" stroke="#fff" stroke-width="1.2" fill="none"/><path d="M2 15H9" stroke="#fff"/></svg>
<svg class="a" style="left:1384px;top:6px" width="12" height="18" viewBox="0 0 12 18"><rect x="3" y="0.5" width="6" height="11" rx="3" fill="#fff"/><path d="M1 8C1 12 11 12 11 8M6 12V16M3 17H9" stroke="#fff" stroke-width="1.2" fill="none"/></svg>
<svg class="a" style="left:1405px;top:8px" width="18" height="13" viewBox="0 0 18 13"><rect x="4.5" y="3.5" width="12" height="7" fill="none" stroke="#fff" stroke-width="1.2"/><rect x="6" y="5" width="7" height="4" fill="#fff"/><path d="M0 3H4M0 8H4M2 0V3" stroke="#fff" stroke-width="1.2"/></svg>
<svg class="a" style="left:1433px;top:7px" width="16" height="16" viewBox="0 0 16 16"><g fill="none" stroke="#fff" stroke-width="1.3"><path d="M1 15A14 14 0 0 1 15 1"/><path d="M4.5 15A10.5 10.5 0 0 1 15 4.5"/><path d="M8 15A7 7 0 0 1 15 8"/></g><circle cx="14" cy="14" r="1.5" fill="#fff"/></svg>
<svg class="a" style="left:1464px;top:12px" width="8" height="11" viewBox="0 0 10 14"><path d="M8 2.5Q5.5 0.8 3.5 2Q1.8 3.5 3.5 5.5Q5 7 8 6.5M8 6.5Q2 7.5 2 10.5Q2 13 6 13H9" fill="none" stroke="#fff" stroke-width="1.2" stroke-linecap="round"/></svg>
<div class="a" style="left:1494.00px;top:8.50px;font-size:13.00px;line-height:13.00px;color:#fff;letter-spacing:-0.774px">8:29 PM</div>
<svg class="a" style="left:1559px;top:8px" width="17" height="16" viewBox="0 0 17 16"><path d="M0.5 0.5H16.5V11.5H10L7 15V11.5H0.5Z" fill="#fff"/><path d="M3 4H14M3 6.5H14M3 9H10" stroke="#222" stroke-width="1"/></svg>
<div class="a" style="left:1596px;top:0;width:1px;height:30px;background:#666"></div>
</div><div class="a" style="left:57px;top:45px;width:55px;height:2px;background:#f4f3f3"></div>
<svg class="a" style="left:0;top:0;pointer-events:none" width="1600" height="900" viewBox="0 0 1600 900">
 <g fill="#dcdcdc" opacity="0.9">
  <path d="M704 845 V825 Q704 814.5 716 814.5 H727 Q730.5 814.5 730.5 818 V821.5 Q730.5 825 727 825 H718 Q714 825 714 829 V840 H757 V827 H748 Q744 827 744 823 V822.5 Q744 819 748 819 H765 Q770 819 770 824 V840 H780 V804 Q780 801 783 801 H787 Q790 801 790 804 V840 H812 V827 H802.5 Q799 827 799 823.5 V822.5 Q799 819 802.5 819 H818 Q823 819 823 824 V840 H849 Q846.5 836 846.5 832 Q846.5 819 861 819 Q875.5 819 875.5 832 Q875.5 836 873 840 H884 Q886 838 886 834 Q886 829 882.5 826 L886 819.5 Q896 824 896 834 Q896 850 883 850 H712 Q704 850 704 845 Z M861 830 Q856.5 830 856.5 833.5 Q856.5 837 861 837 Q866 837 866 833.5 Q866 830 861 830 Z" fill-rule="evenodd"/>
  <circle cx="810" cy="807.5" r="6.5"/><circle cx="860.8" cy="807.5" r="6.5"/><circle cx="889.6" cy="807.5" r="6.5"/>
  <circle cx="723" cy="861" r="6.5"/><circle cx="737.5" cy="861" r="6"/>
 </g>
 <g fill="none" stroke="#c9c7da" stroke-linecap="round" stroke-linejoin="round" stroke-width="3.9">
  <path d="M712.8 892 V879 Q712.8 875 717 875 H720.5 Q724.5 875 724.5 879.5 V892"/>
  <ellipse cx="736.5" cy="883.5" rx="6.5" ry="8"/><path d="M743.5 875 V892"/>
  <path d="M751 892 V875 Q751 870.5 756 870.5 H758"/><path d="M748 877 H757"/>
  <path d="M762.3 884 H777 A7.4 8 0 1 0 775.5 890"/>
  <path d="M780.5 875.5 H793 L780.5 890.5 H794"/>
  <path d="M801 869 V892"/>
  <path d="M807 875 L814 891"/><path d="M821 875 L812.5 896.5"/>
  <path d="M846 877 A7.5 8 0 1 0 846 890"/>
  <ellipse cx="858.5" cy="883.5" rx="7.8" ry="8.2"/>
  <path d="M870.5 892 V879 Q870.5 875 875 875 Q879.3 875 879.3 879 V892 M879.3 879 Q879.3 875 884 875 Q888.3 875 888.3 879 V892"/>
 </g>
 <circle cx="826.5" cy="890.5" r="2.2" fill="#c9c7da"/>
</svg>
</body></html>
